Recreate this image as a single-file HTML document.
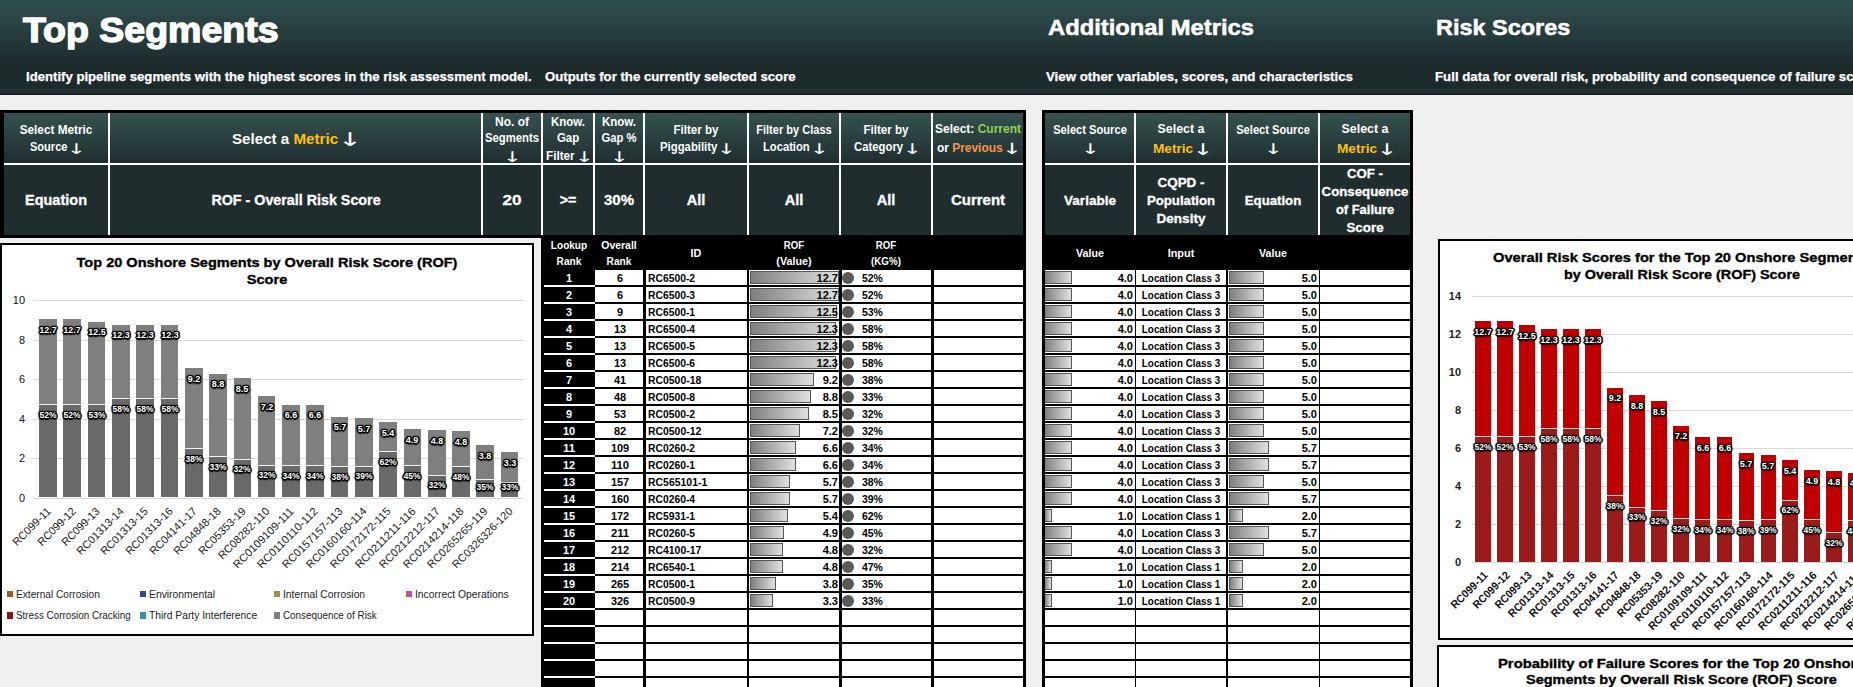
<!DOCTYPE html>
<html lang="en"><head><meta charset="utf-8"><title>Top Segments</title>
<style>
html,body{margin:0;padding:0;background:#f0f0f0;}
#pg{position:relative;width:1853px;height:687px;overflow:hidden;background:#f0f0f0;font-family:'Liberation Sans',sans-serif;}
#pg div{position:absolute;}
.t{position:absolute;white-space:nowrap;line-height:1;font-weight:bold;color:#fff;font-family:'Liberation Sans',sans-serif;}
.g{color:#ffc000}.gr{color:#92d050}.or{color:#f79646}
.dl{text-shadow:1px 0 0 #000,-1px 0 0 #000,0 1px 0 #000,0 -1px 0 #000,1px 1px 0 #000,-1px -1px 0 #000,1px -1px 0 #000,-1px 1px 0 #000,1.5px 0 1px #000,-1.5px 0 1px #000,0 1.5px 1px #000,0 -1.5px 1px #000,0 0 2px #000,0 0 3px #000;}
.ar{font-family:'DejaVu Sans',sans-serif;}
</style></head><body><div id="pg">
<div style="left:0px;top:0px;width:1853px;height:95px;background:linear-gradient(#2f4f4f 0,#1d2a2c 66px,#1d2a2c 88px,#213132 89px,#203030 93px,#141e1f 94px,#141e1f 94.6px,#8a9090 95px);"></div>
<span class="t" style="left:23.20px;top:12.47px;font-size:35px;transform:scaleX(1.071);transform-origin:0 50%;-webkit-text-stroke:1.4px #fff;">Top Segments</span>
<span class="t" style="left:26.00px;top:71.23px;font-size:12.6px;transform:scaleX(1.044);transform-origin:0 50%;-webkit-text-stroke:0.25px #fff;">Identify pipeline segments with the highest scores in the risk assessment model.</span>
<span class="t" style="left:545.20px;top:71.23px;font-size:12.6px;transform:scaleX(1.047);transform-origin:0 50%;-webkit-text-stroke:0.25px #fff;">Outputs for the currently selected score</span>
<span class="t" style="left:1047.80px;top:17.18px;font-size:22px;transform:scaleX(1.080);transform-origin:0 50%;-webkit-text-stroke:0.5px #fff;">Additional Metrics</span>
<span class="t" style="left:1045.80px;top:71.23px;font-size:12.6px;transform:scaleX(1.055);transform-origin:0 50%;-webkit-text-stroke:0.25px #fff;">View other variables, scores, and characteristics</span>
<span class="t" style="left:1436.40px;top:17.18px;font-size:22px;transform:scaleX(1.066);transform-origin:0 50%;-webkit-text-stroke:0.5px #fff;">Risk Scores</span>
<span class="t" style="left:1434.50px;top:71.23px;font-size:12.6px;transform:scaleX(1.053);transform-origin:0 50%;-webkit-text-stroke:0.25px #fff;">Full data for overall risk, probability and consequence of failure scores</span>
<div style="left:0px;top:110px;width:1026px;height:128px;background:#000;"></div>
<div style="left:4px;top:113px;width:1019px;height:122px;background:#fff;"></div>
<div style="left:4px;top:113px;width:104px;height:50px;background:linear-gradient(#35514f,#1f2e30);"></div>
<div style="left:4px;top:165px;width:104px;height:70px;background:#1f2d2e;"></div>
<div style="left:110px;top:113px;width:371px;height:50px;background:linear-gradient(#35514f,#1f2e30);"></div>
<div style="left:110px;top:165px;width:371px;height:70px;background:#1f2d2e;"></div>
<div style="left:483px;top:113px;width:58px;height:50px;background:linear-gradient(#35514f,#1f2e30);"></div>
<div style="left:483px;top:165px;width:58px;height:70px;background:#1f2d2e;"></div>
<div style="left:543px;top:113px;width:50px;height:50px;background:linear-gradient(#35514f,#1f2e30);"></div>
<div style="left:543px;top:165px;width:50px;height:70px;background:#1f2d2e;"></div>
<div style="left:595px;top:113px;width:48px;height:50px;background:linear-gradient(#35514f,#1f2e30);"></div>
<div style="left:595px;top:165px;width:48px;height:70px;background:#1f2d2e;"></div>
<div style="left:645px;top:113px;width:102px;height:50px;background:linear-gradient(#35514f,#1f2e30);"></div>
<div style="left:645px;top:165px;width:102px;height:70px;background:#1f2d2e;"></div>
<div style="left:749px;top:113px;width:90px;height:50px;background:linear-gradient(#35514f,#1f2e30);"></div>
<div style="left:749px;top:165px;width:90px;height:70px;background:#1f2d2e;"></div>
<div style="left:841px;top:113px;width:90px;height:50px;background:linear-gradient(#35514f,#1f2e30);"></div>
<div style="left:841px;top:165px;width:90px;height:70px;background:#1f2d2e;"></div>
<div style="left:933px;top:113px;width:90px;height:50px;background:linear-gradient(#35514f,#1f2e30);"></div>
<div style="left:933px;top:165px;width:90px;height:70px;background:#1f2d2e;"></div>
<span class="t" style="left:56.00px;top:123.92px;font-size:12.26px;transform:translateX(-50%) scaleX(0.962);transform-origin:50% 50%;">Select Metric</span>
<span class="t" style="left:29.63px;top:141.02px;font-size:12.26px;transform:scaleX(0.902);transform-origin:0 50%;">Source</span>
<span class="t ar" style="left:76.34px;top:136.61px;font-size:20px;font-weight:normal;transform:translateX(-50%) scale(1.14,0.73);transform-origin:50% 16.92px;">↓</span>
<span class="t" style="left:232.43px;top:130.86px;font-size:15.4px;transform:scaleX(0.984);transform-origin:0 50%;">Select a <span class="g">Metric</span></span>
<span class="t ar" style="left:350.19px;top:124.83px;font-size:25.8px;font-weight:normal;transform:translateX(-50%) scale(1.14,0.73);transform-origin:50% 21.83px;">↓</span>
<span class="t" style="left:512.00px;top:115.62px;font-size:12.26px;transform:translateX(-50%) scaleX(0.977);transform-origin:50% 50%;">No. of</span>
<span class="t" style="left:512.00px;top:132.42px;font-size:12.26px;transform:translateX(-50%) scaleX(0.920);transform-origin:50% 50%;">Segments</span>
<span class="t ar" style="left:512.00px;top:145.21px;font-size:20px;font-weight:normal;transform:translateX(-50%) scale(1.14,0.73);transform-origin:50% 16.92px;">↓</span>
<span class="t" style="left:568.00px;top:115.62px;font-size:12.26px;transform:translateX(-50%) scaleX(0.941);transform-origin:50% 50%;">Know.</span>
<span class="t" style="left:568.00px;top:132.42px;font-size:12.26px;transform:translateX(-50%) scaleX(0.933);transform-origin:50% 50%;">Gap</span>
<span class="t" style="left:546.18px;top:149.62px;font-size:12.26px;transform:scaleX(0.954);transform-origin:0 50%;">Filter</span>
<span class="t ar" style="left:583.79px;top:145.21px;font-size:20px;font-weight:normal;transform:translateX(-50%) scale(1.14,0.73);transform-origin:50% 16.92px;">↓</span>
<span class="t" style="left:619.00px;top:115.62px;font-size:12.26px;transform:translateX(-50%) scaleX(0.941);transform-origin:50% 50%;">Know.</span>
<span class="t" style="left:619.00px;top:132.42px;font-size:12.26px;transform:translateX(-50%) scaleX(0.917);transform-origin:50% 50%;">Gap %</span>
<span class="t ar" style="left:619.00px;top:145.21px;font-size:20px;font-weight:normal;transform:translateX(-50%) scale(1.14,0.73);transform-origin:50% 16.92px;">↓</span>
<span class="t" style="left:696.00px;top:124.32px;font-size:12.26px;transform:translateX(-50%) scaleX(0.944);transform-origin:50% 50%;">Filter by</span>
<span class="t" style="left:659.77px;top:141.32px;font-size:12.26px;transform:scaleX(0.926);transform-origin:0 50%;">Piggability</span>
<span class="t ar" style="left:726.19px;top:136.91px;font-size:20px;font-weight:normal;transform:translateX(-50%) scale(1.14,0.73);transform-origin:50% 16.92px;">↓</span>
<span class="t" style="left:794.00px;top:124.32px;font-size:12.26px;transform:translateX(-50%) scaleX(0.902);transform-origin:50% 50%;">Filter by Class</span>
<span class="t" style="left:763.07px;top:141.32px;font-size:12.26px;transform:scaleX(0.914);transform-origin:0 50%;">Location</span>
<span class="t ar" style="left:818.90px;top:136.91px;font-size:20px;font-weight:normal;transform:translateX(-50%) scale(1.14,0.73);transform-origin:50% 16.92px;">↓</span>
<span class="t" style="left:886.00px;top:124.32px;font-size:12.26px;transform:translateX(-50%) scaleX(0.944);transform-origin:50% 50%;">Filter by</span>
<span class="t" style="left:853.89px;top:141.32px;font-size:12.26px;transform:scaleX(0.925);transform-origin:0 50%;">Category</span>
<span class="t ar" style="left:912.08px;top:136.91px;font-size:20px;font-weight:normal;transform:translateX(-50%) scale(1.14,0.73);transform-origin:50% 16.92px;">↓</span>
<span class="t" style="left:978.00px;top:123.10px;font-size:12.88px;transform:translateX(-50%) scaleX(0.931);transform-origin:50% 50%;">Select: <span class="gr">Current</span></span>
<span class="t" style="left:937.21px;top:141.60px;font-size:12.88px;transform:scaleX(0.926);transform-origin:0 50%;">or <span class="or">Previous</span></span>
<span class="t ar" style="left:1012.46px;top:136.97px;font-size:21px;font-weight:normal;transform:translateX(-50%) scale(1.14,0.73);transform-origin:50% 17.77px;">↓</span>
<span class="t" style="left:56.00px;top:193.48px;font-size:14.08px;transform:translateX(-50%) scaleX(1.030);transform-origin:50% 50%;-webkit-text-stroke:0.3px #fff;">Equation</span>
<span class="t" style="left:295.50px;top:193.48px;font-size:14.08px;transform:translateX(-50%) scaleX(1.015);transform-origin:50% 50%;-webkit-text-stroke:0.3px #fff;">ROF - Overall Risk Score</span>
<span class="t" style="left:568.00px;top:193.48px;font-size:14.08px;transform:translateX(-50%) scaleX(1.016);transform-origin:50% 50%;-webkit-text-stroke:0.3px #fff;">&gt;=</span>
<span class="t" style="left:696.00px;top:193.48px;font-size:14.08px;transform:translateX(-50%) scaleX(1.035);transform-origin:50% 50%;-webkit-text-stroke:0.3px #fff;">All</span>
<span class="t" style="left:794.00px;top:193.48px;font-size:14.08px;transform:translateX(-50%) scaleX(1.035);transform-origin:50% 50%;-webkit-text-stroke:0.3px #fff;">All</span>
<span class="t" style="left:886.00px;top:193.48px;font-size:14.08px;transform:translateX(-50%) scaleX(1.035);transform-origin:50% 50%;-webkit-text-stroke:0.3px #fff;">All</span>
<span class="t" style="left:978.00px;top:193.48px;font-size:14.08px;transform:translateX(-50%) scaleX(1.064);transform-origin:50% 50%;-webkit-text-stroke:0.3px #fff;">Current</span>
<span class="t" style="left:512.00px;top:193.48px;font-size:14.08px;transform:translateX(-50%) scaleX(1.213);transform-origin:50% 50%;-webkit-text-stroke:0.3px #fff;">20</span>
<span class="t" style="left:619.00px;top:193.48px;font-size:14.08px;transform:translateX(-50%) scaleX(1.065);transform-origin:50% 50%;-webkit-text-stroke:0.3px #fff;">30%</span>
<div style="left:1042px;top:110px;width:370.8px;height:600px;background:#000;"></div>
<div style="left:1045px;top:113px;width:365px;height:122px;background:#fff;"></div>
<div style="left:1045px;top:113px;width:89px;height:50px;background:linear-gradient(#35514f,#1f2e30);"></div>
<div style="left:1045px;top:165px;width:89px;height:70px;background:#1f2d2e;"></div>
<div style="left:1136px;top:113px;width:90px;height:50px;background:linear-gradient(#35514f,#1f2e30);"></div>
<div style="left:1136px;top:165px;width:90px;height:70px;background:#1f2d2e;"></div>
<div style="left:1228px;top:113px;width:90px;height:50px;background:linear-gradient(#35514f,#1f2e30);"></div>
<div style="left:1228px;top:165px;width:90px;height:70px;background:#1f2d2e;"></div>
<div style="left:1320px;top:113px;width:90px;height:50px;background:linear-gradient(#35514f,#1f2e30);"></div>
<div style="left:1320px;top:165px;width:90px;height:70px;background:#1f2d2e;"></div>
<span class="t" style="left:1089.50px;top:124.12px;font-size:12.26px;transform:translateX(-50%) scaleX(0.909);transform-origin:50% 50%;">Select Source</span>
<span class="t ar" style="left:1089.50px;top:136.71px;font-size:20px;font-weight:normal;transform:translateX(-50%) scale(1.14,0.73);transform-origin:50% 16.92px;">↓</span>
<span class="t" style="left:1181.00px;top:121.77px;font-size:13.5px;transform:translateX(-50%) scaleX(0.922);transform-origin:50% 50%;">Select a</span>
<span class="t" style="left:1152.65px;top:141.67px;font-size:13.5px;transform:scaleX(1.009);transform-origin:0 50%;"><span class="g">Metric</span></span>
<span class="t ar" style="left:1202.71px;top:136.84px;font-size:22px;font-weight:normal;transform:translateX(-50%) scale(1.14,0.73);transform-origin:50% 18.61px;">↓</span>
<span class="t" style="left:1273.00px;top:124.12px;font-size:12.26px;transform:translateX(-50%) scaleX(0.909);transform-origin:50% 50%;">Select Source</span>
<span class="t ar" style="left:1273.00px;top:136.71px;font-size:20px;font-weight:normal;transform:translateX(-50%) scale(1.14,0.73);transform-origin:50% 16.92px;">↓</span>
<span class="t" style="left:1365.00px;top:121.77px;font-size:13.5px;transform:translateX(-50%) scaleX(0.922);transform-origin:50% 50%;">Select a</span>
<span class="t" style="left:1336.65px;top:141.67px;font-size:13.5px;transform:scaleX(1.009);transform-origin:0 50%;"><span class="g">Metric</span></span>
<span class="t ar" style="left:1386.71px;top:136.84px;font-size:22px;font-weight:normal;transform:translateX(-50%) scale(1.14,0.73);transform-origin:50% 18.61px;">↓</span>
<span class="t" style="left:1089.50px;top:194.96px;font-size:12.8px;transform:translateX(-50%) scaleX(1.055);transform-origin:50% 50%;-webkit-text-stroke:0.3px #fff;">Variable</span>
<span class="t" style="left:1181.00px;top:176.86px;font-size:12.8px;transform:translateX(-50%) scaleX(1.050);transform-origin:50% 50%;-webkit-text-stroke:0.3px #fff;">CQPD -</span>
<span class="t" style="left:1181.00px;top:194.96px;font-size:12.8px;transform:translateX(-50%) scaleX(1.032);transform-origin:50% 50%;-webkit-text-stroke:0.3px #fff;">Population</span>
<span class="t" style="left:1181.00px;top:213.06px;font-size:12.8px;transform:translateX(-50%) scaleX(1.058);transform-origin:50% 50%;-webkit-text-stroke:0.3px #fff;">Density</span>
<span class="t" style="left:1273.00px;top:194.96px;font-size:12.8px;transform:translateX(-50%) scaleX(1.030);transform-origin:50% 50%;-webkit-text-stroke:0.3px #fff;">Equation</span>
<span class="t" style="left:1365.00px;top:167.76px;font-size:12.8px;transform:translateX(-50%) scaleX(1.033);transform-origin:50% 50%;-webkit-text-stroke:0.3px #fff;">COF -</span>
<span class="t" style="left:1365.00px;top:185.96px;font-size:12.8px;transform:translateX(-50%) scaleX(1.035);transform-origin:50% 50%;-webkit-text-stroke:0.3px #fff;">Consequence</span>
<span class="t" style="left:1365.00px;top:203.96px;font-size:12.8px;transform:translateX(-50%) scaleX(1.011);transform-origin:50% 50%;-webkit-text-stroke:0.3px #fff;">of Failure</span>
<span class="t" style="left:1365.00px;top:221.96px;font-size:12.8px;transform:translateX(-50%) scaleX(1.044);transform-origin:50% 50%;-webkit-text-stroke:0.3px #fff;">Score</span>
<div style="left:541px;top:235px;width:485px;height:460px;background:#000;"></div>
<span class="t" style="left:568.50px;top:240.15px;font-size:11.04px;transform:translateX(-50%) scaleX(0.911);transform-origin:50% 50%;">Lookup</span>
<span class="t" style="left:568.50px;top:255.65px;font-size:11.04px;transform:translateX(-50%) scaleX(0.922);transform-origin:50% 50%;">Rank</span>
<span class="t" style="left:619.00px;top:240.15px;font-size:11.04px;transform:translateX(-50%) scaleX(0.950);transform-origin:50% 50%;">Overall</span>
<span class="t" style="left:619.00px;top:255.65px;font-size:11.04px;transform:translateX(-50%) scaleX(0.922);transform-origin:50% 50%;">Rank</span>
<span class="t" style="left:696.00px;top:247.95px;font-size:11.04px;transform:translateX(-50%) scaleX(0.976);transform-origin:50% 50%;">ID</span>
<span class="t" style="left:794.00px;top:240.15px;font-size:11.04px;transform:translateX(-50%) scaleX(0.870);transform-origin:50% 50%;">ROF</span>
<span class="t" style="left:794.00px;top:255.65px;font-size:11.04px;transform:translateX(-50%) scaleX(0.975);transform-origin:50% 50%;">(Value)</span>
<span class="t" style="left:886.00px;top:240.15px;font-size:11.04px;transform:translateX(-50%) scaleX(0.870);transform-origin:50% 50%;">ROF</span>
<span class="t" style="left:886.00px;top:255.65px;font-size:11.04px;transform:translateX(-50%) scaleX(0.889);transform-origin:50% 50%;">(KG%)</span>
<div style="left:595px;top:270px;width:48px;height:15px;background:#fff;"></div>
<div style="left:646px;top:270px;width:101px;height:15px;background:#fff;"></div>
<div style="left:749px;top:270px;width:90px;height:15px;background:#fff;"></div>
<div style="left:842px;top:270px;width:89px;height:15px;background:#fff;"></div>
<div style="left:934px;top:270px;width:89px;height:15px;background:#fff;"></div>
<div style="left:1045px;top:270px;width:89.5px;height:15px;background:#fff;"></div>
<div style="left:1136px;top:270px;width:90px;height:15px;background:#fff;"></div>
<div style="left:1228px;top:270px;width:90.7px;height:15px;background:#fff;"></div>
<div style="left:1320px;top:270px;width:90px;height:15px;background:#fff;"></div>
<div style="left:544px;top:285px;width:50.5px;height:2px;background:#fff;"></div>
<span class="t" style="left:568.50px;top:273.25px;font-size:11.04px;transform:translateX(-50%) scaleX(0.991);transform-origin:50% 50%;">1</span>
<span class="t" style="left:620.00px;top:273.25px;font-size:11.04px;color:#000;transform:translateX(-50%) scaleX(0.991);transform-origin:50% 50%;">6</span>
<span class="t" style="left:648.00px;top:273.25px;font-size:11.04px;color:#000;transform:scaleX(0.937);transform-origin:0 50%;">RC6500-2</span>
<div style="left:750px;top:271px;width:88.5px;height:12.5px;background:linear-gradient(90deg,#7f7f7f,#e0e0e0);box-sizing:border-box;border:1px solid #555;"></div>
<span class="t" style="left:838.30px;top:273.25px;font-size:11.04px;color:#000;transform:translateX(-100%) scaleX(0.999);transform-origin:100% 50%;">12.7</span>
<div style="left:842px;top:271.7px;width:12.2px;height:12.2px;background:#595959;border-radius:50%;"></div>
<span class="t" style="left:862.00px;top:273.25px;font-size:11.04px;color:#000;transform:scaleX(0.947);transform-origin:0 50%;">52%</span>
<div style="left:1045px;top:271px;width:27.2px;height:12.5px;background:linear-gradient(90deg,#7f7f7f,#e0e0e0);box-sizing:border-box;border:1px solid #555;border-left:0;"></div>
<span class="t" style="left:1133.00px;top:273.25px;font-size:11.04px;color:#000;transform:translateX(-100%) scaleX(1.002);transform-origin:100% 50%;">4.0</span>
<span class="t" style="left:1181.00px;top:273.25px;font-size:11.04px;color:#000;transform:translateX(-50%) scaleX(0.893);transform-origin:50% 50%;">Location Class 3</span>
<div style="left:1229px;top:271px;width:34.75px;height:12.5px;background:linear-gradient(90deg,#7f7f7f,#e0e0e0);box-sizing:border-box;border:1px solid #555;"></div>
<span class="t" style="left:1317.00px;top:273.25px;font-size:11.04px;color:#000;transform:translateX(-100%) scaleX(1.002);transform-origin:100% 50%;">5.0</span>
<div style="left:595px;top:287px;width:48px;height:15px;background:#fff;"></div>
<div style="left:646px;top:287px;width:101px;height:15px;background:#fff;"></div>
<div style="left:749px;top:287px;width:90px;height:15px;background:#fff;"></div>
<div style="left:842px;top:287px;width:89px;height:15px;background:#fff;"></div>
<div style="left:934px;top:287px;width:89px;height:15px;background:#fff;"></div>
<div style="left:1045px;top:287px;width:89.5px;height:15px;background:#fff;"></div>
<div style="left:1136px;top:287px;width:90px;height:15px;background:#fff;"></div>
<div style="left:1228px;top:287px;width:90.7px;height:15px;background:#fff;"></div>
<div style="left:1320px;top:287px;width:90px;height:15px;background:#fff;"></div>
<div style="left:544px;top:302px;width:50.5px;height:2px;background:#fff;"></div>
<span class="t" style="left:568.50px;top:290.25px;font-size:11.04px;transform:translateX(-50%) scaleX(0.991);transform-origin:50% 50%;">2</span>
<span class="t" style="left:620.00px;top:290.25px;font-size:11.04px;color:#000;transform:translateX(-50%) scaleX(0.991);transform-origin:50% 50%;">6</span>
<span class="t" style="left:648.00px;top:290.25px;font-size:11.04px;color:#000;transform:scaleX(0.937);transform-origin:0 50%;">RC6500-3</span>
<div style="left:750px;top:288px;width:88.5px;height:12.5px;background:linear-gradient(90deg,#7f7f7f,#e0e0e0);box-sizing:border-box;border:1px solid #555;"></div>
<span class="t" style="left:838.30px;top:290.25px;font-size:11.04px;color:#000;transform:translateX(-100%) scaleX(0.999);transform-origin:100% 50%;">12.7</span>
<div style="left:842px;top:288.7px;width:12.2px;height:12.2px;background:#595959;border-radius:50%;"></div>
<span class="t" style="left:862.00px;top:290.25px;font-size:11.04px;color:#000;transform:scaleX(0.947);transform-origin:0 50%;">52%</span>
<div style="left:1045px;top:288px;width:27.2px;height:12.5px;background:linear-gradient(90deg,#7f7f7f,#e0e0e0);box-sizing:border-box;border:1px solid #555;border-left:0;"></div>
<span class="t" style="left:1133.00px;top:290.25px;font-size:11.04px;color:#000;transform:translateX(-100%) scaleX(1.002);transform-origin:100% 50%;">4.0</span>
<span class="t" style="left:1181.00px;top:290.25px;font-size:11.04px;color:#000;transform:translateX(-50%) scaleX(0.893);transform-origin:50% 50%;">Location Class 3</span>
<div style="left:1229px;top:288px;width:34.75px;height:12.5px;background:linear-gradient(90deg,#7f7f7f,#e0e0e0);box-sizing:border-box;border:1px solid #555;"></div>
<span class="t" style="left:1317.00px;top:290.25px;font-size:11.04px;color:#000;transform:translateX(-100%) scaleX(1.002);transform-origin:100% 50%;">5.0</span>
<div style="left:595px;top:304px;width:48px;height:15px;background:#fff;"></div>
<div style="left:646px;top:304px;width:101px;height:15px;background:#fff;"></div>
<div style="left:749px;top:304px;width:90px;height:15px;background:#fff;"></div>
<div style="left:842px;top:304px;width:89px;height:15px;background:#fff;"></div>
<div style="left:934px;top:304px;width:89px;height:15px;background:#fff;"></div>
<div style="left:1045px;top:304px;width:89.5px;height:15px;background:#fff;"></div>
<div style="left:1136px;top:304px;width:90px;height:15px;background:#fff;"></div>
<div style="left:1228px;top:304px;width:90.7px;height:15px;background:#fff;"></div>
<div style="left:1320px;top:304px;width:90px;height:15px;background:#fff;"></div>
<div style="left:544px;top:319px;width:50.5px;height:2px;background:#fff;"></div>
<span class="t" style="left:568.50px;top:307.25px;font-size:11.04px;transform:translateX(-50%) scaleX(0.991);transform-origin:50% 50%;">3</span>
<span class="t" style="left:620.00px;top:307.25px;font-size:11.04px;color:#000;transform:translateX(-50%) scaleX(0.991);transform-origin:50% 50%;">9</span>
<span class="t" style="left:648.00px;top:307.25px;font-size:11.04px;color:#000;transform:scaleX(0.937);transform-origin:0 50%;">RC6500-1</span>
<div style="left:750px;top:305px;width:87.1063px;height:12.5px;background:linear-gradient(90deg,#7f7f7f,#e0e0e0);box-sizing:border-box;border:1px solid #555;"></div>
<span class="t" style="left:838.30px;top:307.25px;font-size:11.04px;color:#000;transform:translateX(-100%) scaleX(0.999);transform-origin:100% 50%;">12.5</span>
<div style="left:842px;top:305.7px;width:12.2px;height:12.2px;background:#595959;border-radius:50%;"></div>
<span class="t" style="left:862.00px;top:307.25px;font-size:11.04px;color:#000;transform:scaleX(0.947);transform-origin:0 50%;">53%</span>
<div style="left:1045px;top:305px;width:27.2px;height:12.5px;background:linear-gradient(90deg,#7f7f7f,#e0e0e0);box-sizing:border-box;border:1px solid #555;border-left:0;"></div>
<span class="t" style="left:1133.00px;top:307.25px;font-size:11.04px;color:#000;transform:translateX(-100%) scaleX(1.002);transform-origin:100% 50%;">4.0</span>
<span class="t" style="left:1181.00px;top:307.25px;font-size:11.04px;color:#000;transform:translateX(-50%) scaleX(0.893);transform-origin:50% 50%;">Location Class 3</span>
<div style="left:1229px;top:305px;width:34.75px;height:12.5px;background:linear-gradient(90deg,#7f7f7f,#e0e0e0);box-sizing:border-box;border:1px solid #555;"></div>
<span class="t" style="left:1317.00px;top:307.25px;font-size:11.04px;color:#000;transform:translateX(-100%) scaleX(1.002);transform-origin:100% 50%;">5.0</span>
<div style="left:595px;top:321px;width:48px;height:15px;background:#fff;"></div>
<div style="left:646px;top:321px;width:101px;height:15px;background:#fff;"></div>
<div style="left:749px;top:321px;width:90px;height:15px;background:#fff;"></div>
<div style="left:842px;top:321px;width:89px;height:15px;background:#fff;"></div>
<div style="left:934px;top:321px;width:89px;height:15px;background:#fff;"></div>
<div style="left:1045px;top:321px;width:89.5px;height:15px;background:#fff;"></div>
<div style="left:1136px;top:321px;width:90px;height:15px;background:#fff;"></div>
<div style="left:1228px;top:321px;width:90.7px;height:15px;background:#fff;"></div>
<div style="left:1320px;top:321px;width:90px;height:15px;background:#fff;"></div>
<div style="left:544px;top:336px;width:50.5px;height:2px;background:#fff;"></div>
<span class="t" style="left:568.50px;top:324.25px;font-size:11.04px;transform:translateX(-50%) scaleX(0.991);transform-origin:50% 50%;">4</span>
<span class="t" style="left:620.00px;top:324.25px;font-size:11.04px;color:#000;transform:translateX(-50%) scaleX(0.991);transform-origin:50% 50%;">13</span>
<span class="t" style="left:648.00px;top:324.25px;font-size:11.04px;color:#000;transform:scaleX(0.937);transform-origin:0 50%;">RC6500-4</span>
<div style="left:750px;top:322px;width:85.7126px;height:12.5px;background:linear-gradient(90deg,#7f7f7f,#e0e0e0);box-sizing:border-box;border:1px solid #555;"></div>
<span class="t" style="left:838.30px;top:324.25px;font-size:11.04px;color:#000;transform:translateX(-100%) scaleX(0.999);transform-origin:100% 50%;">12.3</span>
<div style="left:842px;top:322.7px;width:12.2px;height:12.2px;background:#595959;border-radius:50%;"></div>
<span class="t" style="left:862.00px;top:324.25px;font-size:11.04px;color:#000;transform:scaleX(0.947);transform-origin:0 50%;">58%</span>
<div style="left:1045px;top:322px;width:27.2px;height:12.5px;background:linear-gradient(90deg,#7f7f7f,#e0e0e0);box-sizing:border-box;border:1px solid #555;border-left:0;"></div>
<span class="t" style="left:1133.00px;top:324.25px;font-size:11.04px;color:#000;transform:translateX(-100%) scaleX(1.002);transform-origin:100% 50%;">4.0</span>
<span class="t" style="left:1181.00px;top:324.25px;font-size:11.04px;color:#000;transform:translateX(-50%) scaleX(0.893);transform-origin:50% 50%;">Location Class 3</span>
<div style="left:1229px;top:322px;width:34.75px;height:12.5px;background:linear-gradient(90deg,#7f7f7f,#e0e0e0);box-sizing:border-box;border:1px solid #555;"></div>
<span class="t" style="left:1317.00px;top:324.25px;font-size:11.04px;color:#000;transform:translateX(-100%) scaleX(1.002);transform-origin:100% 50%;">5.0</span>
<div style="left:595px;top:338px;width:48px;height:15px;background:#fff;"></div>
<div style="left:646px;top:338px;width:101px;height:15px;background:#fff;"></div>
<div style="left:749px;top:338px;width:90px;height:15px;background:#fff;"></div>
<div style="left:842px;top:338px;width:89px;height:15px;background:#fff;"></div>
<div style="left:934px;top:338px;width:89px;height:15px;background:#fff;"></div>
<div style="left:1045px;top:338px;width:89.5px;height:15px;background:#fff;"></div>
<div style="left:1136px;top:338px;width:90px;height:15px;background:#fff;"></div>
<div style="left:1228px;top:338px;width:90.7px;height:15px;background:#fff;"></div>
<div style="left:1320px;top:338px;width:90px;height:15px;background:#fff;"></div>
<div style="left:544px;top:353px;width:50.5px;height:2px;background:#fff;"></div>
<span class="t" style="left:568.50px;top:341.25px;font-size:11.04px;transform:translateX(-50%) scaleX(0.991);transform-origin:50% 50%;">5</span>
<span class="t" style="left:620.00px;top:341.25px;font-size:11.04px;color:#000;transform:translateX(-50%) scaleX(0.991);transform-origin:50% 50%;">13</span>
<span class="t" style="left:648.00px;top:341.25px;font-size:11.04px;color:#000;transform:scaleX(0.937);transform-origin:0 50%;">RC6500-5</span>
<div style="left:750px;top:339px;width:85.7126px;height:12.5px;background:linear-gradient(90deg,#7f7f7f,#e0e0e0);box-sizing:border-box;border:1px solid #555;"></div>
<span class="t" style="left:838.30px;top:341.25px;font-size:11.04px;color:#000;transform:translateX(-100%) scaleX(0.999);transform-origin:100% 50%;">12.3</span>
<div style="left:842px;top:339.7px;width:12.2px;height:12.2px;background:#595959;border-radius:50%;"></div>
<span class="t" style="left:862.00px;top:341.25px;font-size:11.04px;color:#000;transform:scaleX(0.947);transform-origin:0 50%;">58%</span>
<div style="left:1045px;top:339px;width:27.2px;height:12.5px;background:linear-gradient(90deg,#7f7f7f,#e0e0e0);box-sizing:border-box;border:1px solid #555;border-left:0;"></div>
<span class="t" style="left:1133.00px;top:341.25px;font-size:11.04px;color:#000;transform:translateX(-100%) scaleX(1.002);transform-origin:100% 50%;">4.0</span>
<span class="t" style="left:1181.00px;top:341.25px;font-size:11.04px;color:#000;transform:translateX(-50%) scaleX(0.893);transform-origin:50% 50%;">Location Class 3</span>
<div style="left:1229px;top:339px;width:34.75px;height:12.5px;background:linear-gradient(90deg,#7f7f7f,#e0e0e0);box-sizing:border-box;border:1px solid #555;"></div>
<span class="t" style="left:1317.00px;top:341.25px;font-size:11.04px;color:#000;transform:translateX(-100%) scaleX(1.002);transform-origin:100% 50%;">5.0</span>
<div style="left:595px;top:355px;width:48px;height:15px;background:#fff;"></div>
<div style="left:646px;top:355px;width:101px;height:15px;background:#fff;"></div>
<div style="left:749px;top:355px;width:90px;height:15px;background:#fff;"></div>
<div style="left:842px;top:355px;width:89px;height:15px;background:#fff;"></div>
<div style="left:934px;top:355px;width:89px;height:15px;background:#fff;"></div>
<div style="left:1045px;top:355px;width:89.5px;height:15px;background:#fff;"></div>
<div style="left:1136px;top:355px;width:90px;height:15px;background:#fff;"></div>
<div style="left:1228px;top:355px;width:90.7px;height:15px;background:#fff;"></div>
<div style="left:1320px;top:355px;width:90px;height:15px;background:#fff;"></div>
<div style="left:544px;top:370px;width:50.5px;height:2px;background:#fff;"></div>
<span class="t" style="left:568.50px;top:358.25px;font-size:11.04px;transform:translateX(-50%) scaleX(0.991);transform-origin:50% 50%;">6</span>
<span class="t" style="left:620.00px;top:358.25px;font-size:11.04px;color:#000;transform:translateX(-50%) scaleX(0.991);transform-origin:50% 50%;">13</span>
<span class="t" style="left:648.00px;top:358.25px;font-size:11.04px;color:#000;transform:scaleX(0.937);transform-origin:0 50%;">RC6500-6</span>
<div style="left:750px;top:356px;width:85.7126px;height:12.5px;background:linear-gradient(90deg,#7f7f7f,#e0e0e0);box-sizing:border-box;border:1px solid #555;"></div>
<span class="t" style="left:838.30px;top:358.25px;font-size:11.04px;color:#000;transform:translateX(-100%) scaleX(0.999);transform-origin:100% 50%;">12.3</span>
<div style="left:842px;top:356.7px;width:12.2px;height:12.2px;background:#595959;border-radius:50%;"></div>
<span class="t" style="left:862.00px;top:358.25px;font-size:11.04px;color:#000;transform:scaleX(0.947);transform-origin:0 50%;">58%</span>
<div style="left:1045px;top:356px;width:27.2px;height:12.5px;background:linear-gradient(90deg,#7f7f7f,#e0e0e0);box-sizing:border-box;border:1px solid #555;border-left:0;"></div>
<span class="t" style="left:1133.00px;top:358.25px;font-size:11.04px;color:#000;transform:translateX(-100%) scaleX(1.002);transform-origin:100% 50%;">4.0</span>
<span class="t" style="left:1181.00px;top:358.25px;font-size:11.04px;color:#000;transform:translateX(-50%) scaleX(0.893);transform-origin:50% 50%;">Location Class 3</span>
<div style="left:1229px;top:356px;width:34.75px;height:12.5px;background:linear-gradient(90deg,#7f7f7f,#e0e0e0);box-sizing:border-box;border:1px solid #555;"></div>
<span class="t" style="left:1317.00px;top:358.25px;font-size:11.04px;color:#000;transform:translateX(-100%) scaleX(1.002);transform-origin:100% 50%;">5.0</span>
<div style="left:595px;top:372px;width:48px;height:15px;background:#fff;"></div>
<div style="left:646px;top:372px;width:101px;height:15px;background:#fff;"></div>
<div style="left:749px;top:372px;width:90px;height:15px;background:#fff;"></div>
<div style="left:842px;top:372px;width:89px;height:15px;background:#fff;"></div>
<div style="left:934px;top:372px;width:89px;height:15px;background:#fff;"></div>
<div style="left:1045px;top:372px;width:89.5px;height:15px;background:#fff;"></div>
<div style="left:1136px;top:372px;width:90px;height:15px;background:#fff;"></div>
<div style="left:1228px;top:372px;width:90.7px;height:15px;background:#fff;"></div>
<div style="left:1320px;top:372px;width:90px;height:15px;background:#fff;"></div>
<div style="left:544px;top:387px;width:50.5px;height:2px;background:#fff;"></div>
<span class="t" style="left:568.50px;top:375.25px;font-size:11.04px;transform:translateX(-50%) scaleX(0.991);transform-origin:50% 50%;">7</span>
<span class="t" style="left:620.00px;top:375.25px;font-size:11.04px;color:#000;transform:translateX(-50%) scaleX(0.991);transform-origin:50% 50%;">41</span>
<span class="t" style="left:648.00px;top:375.25px;font-size:11.04px;color:#000;transform:scaleX(0.943);transform-origin:0 50%;">RC0500-18</span>
<div style="left:750px;top:373px;width:64.1102px;height:12.5px;background:linear-gradient(90deg,#7f7f7f,#e0e0e0);box-sizing:border-box;border:1px solid #555;"></div>
<span class="t" style="left:838.30px;top:375.25px;font-size:11.04px;color:#000;transform:translateX(-100%) scaleX(1.002);transform-origin:100% 50%;">9.2</span>
<div style="left:842px;top:373.7px;width:12.2px;height:12.2px;background:#595959;border-radius:50%;"></div>
<span class="t" style="left:862.00px;top:375.25px;font-size:11.04px;color:#000;transform:scaleX(0.947);transform-origin:0 50%;">38%</span>
<div style="left:1045px;top:373px;width:27.2px;height:12.5px;background:linear-gradient(90deg,#7f7f7f,#e0e0e0);box-sizing:border-box;border:1px solid #555;border-left:0;"></div>
<span class="t" style="left:1133.00px;top:375.25px;font-size:11.04px;color:#000;transform:translateX(-100%) scaleX(1.002);transform-origin:100% 50%;">4.0</span>
<span class="t" style="left:1181.00px;top:375.25px;font-size:11.04px;color:#000;transform:translateX(-50%) scaleX(0.893);transform-origin:50% 50%;">Location Class 3</span>
<div style="left:1229px;top:373px;width:34.75px;height:12.5px;background:linear-gradient(90deg,#7f7f7f,#e0e0e0);box-sizing:border-box;border:1px solid #555;"></div>
<span class="t" style="left:1317.00px;top:375.25px;font-size:11.04px;color:#000;transform:translateX(-100%) scaleX(1.002);transform-origin:100% 50%;">5.0</span>
<div style="left:595px;top:389px;width:48px;height:15px;background:#fff;"></div>
<div style="left:646px;top:389px;width:101px;height:15px;background:#fff;"></div>
<div style="left:749px;top:389px;width:90px;height:15px;background:#fff;"></div>
<div style="left:842px;top:389px;width:89px;height:15px;background:#fff;"></div>
<div style="left:934px;top:389px;width:89px;height:15px;background:#fff;"></div>
<div style="left:1045px;top:389px;width:89.5px;height:15px;background:#fff;"></div>
<div style="left:1136px;top:389px;width:90px;height:15px;background:#fff;"></div>
<div style="left:1228px;top:389px;width:90.7px;height:15px;background:#fff;"></div>
<div style="left:1320px;top:389px;width:90px;height:15px;background:#fff;"></div>
<div style="left:544px;top:404px;width:50.5px;height:2px;background:#fff;"></div>
<span class="t" style="left:568.50px;top:392.25px;font-size:11.04px;transform:translateX(-50%) scaleX(0.991);transform-origin:50% 50%;">8</span>
<span class="t" style="left:620.00px;top:392.25px;font-size:11.04px;color:#000;transform:translateX(-50%) scaleX(0.991);transform-origin:50% 50%;">48</span>
<span class="t" style="left:648.00px;top:392.25px;font-size:11.04px;color:#000;transform:scaleX(0.937);transform-origin:0 50%;">RC0500-8</span>
<div style="left:750px;top:390px;width:61.3228px;height:12.5px;background:linear-gradient(90deg,#7f7f7f,#e0e0e0);box-sizing:border-box;border:1px solid #555;"></div>
<span class="t" style="left:838.30px;top:392.25px;font-size:11.04px;color:#000;transform:translateX(-100%) scaleX(1.002);transform-origin:100% 50%;">8.8</span>
<div style="left:842px;top:390.7px;width:12.2px;height:12.2px;background:#595959;border-radius:50%;"></div>
<span class="t" style="left:862.00px;top:392.25px;font-size:11.04px;color:#000;transform:scaleX(0.947);transform-origin:0 50%;">33%</span>
<div style="left:1045px;top:390px;width:27.2px;height:12.5px;background:linear-gradient(90deg,#7f7f7f,#e0e0e0);box-sizing:border-box;border:1px solid #555;border-left:0;"></div>
<span class="t" style="left:1133.00px;top:392.25px;font-size:11.04px;color:#000;transform:translateX(-100%) scaleX(1.002);transform-origin:100% 50%;">4.0</span>
<span class="t" style="left:1181.00px;top:392.25px;font-size:11.04px;color:#000;transform:translateX(-50%) scaleX(0.893);transform-origin:50% 50%;">Location Class 3</span>
<div style="left:1229px;top:390px;width:34.75px;height:12.5px;background:linear-gradient(90deg,#7f7f7f,#e0e0e0);box-sizing:border-box;border:1px solid #555;"></div>
<span class="t" style="left:1317.00px;top:392.25px;font-size:11.04px;color:#000;transform:translateX(-100%) scaleX(1.002);transform-origin:100% 50%;">5.0</span>
<div style="left:595px;top:406px;width:48px;height:15px;background:#fff;"></div>
<div style="left:646px;top:406px;width:101px;height:15px;background:#fff;"></div>
<div style="left:749px;top:406px;width:90px;height:15px;background:#fff;"></div>
<div style="left:842px;top:406px;width:89px;height:15px;background:#fff;"></div>
<div style="left:934px;top:406px;width:89px;height:15px;background:#fff;"></div>
<div style="left:1045px;top:406px;width:89.5px;height:15px;background:#fff;"></div>
<div style="left:1136px;top:406px;width:90px;height:15px;background:#fff;"></div>
<div style="left:1228px;top:406px;width:90.7px;height:15px;background:#fff;"></div>
<div style="left:1320px;top:406px;width:90px;height:15px;background:#fff;"></div>
<div style="left:544px;top:421px;width:50.5px;height:2px;background:#fff;"></div>
<span class="t" style="left:568.50px;top:409.25px;font-size:11.04px;transform:translateX(-50%) scaleX(0.991);transform-origin:50% 50%;">9</span>
<span class="t" style="left:620.00px;top:409.25px;font-size:11.04px;color:#000;transform:translateX(-50%) scaleX(0.991);transform-origin:50% 50%;">53</span>
<span class="t" style="left:648.00px;top:409.25px;font-size:11.04px;color:#000;transform:scaleX(0.937);transform-origin:0 50%;">RC0500-2</span>
<div style="left:750px;top:407px;width:59.2323px;height:12.5px;background:linear-gradient(90deg,#7f7f7f,#e0e0e0);box-sizing:border-box;border:1px solid #555;"></div>
<span class="t" style="left:838.30px;top:409.25px;font-size:11.04px;color:#000;transform:translateX(-100%) scaleX(1.002);transform-origin:100% 50%;">8.5</span>
<div style="left:842px;top:407.7px;width:12.2px;height:12.2px;background:#595959;border-radius:50%;"></div>
<span class="t" style="left:862.00px;top:409.25px;font-size:11.04px;color:#000;transform:scaleX(0.947);transform-origin:0 50%;">32%</span>
<div style="left:1045px;top:407px;width:27.2px;height:12.5px;background:linear-gradient(90deg,#7f7f7f,#e0e0e0);box-sizing:border-box;border:1px solid #555;border-left:0;"></div>
<span class="t" style="left:1133.00px;top:409.25px;font-size:11.04px;color:#000;transform:translateX(-100%) scaleX(1.002);transform-origin:100% 50%;">4.0</span>
<span class="t" style="left:1181.00px;top:409.25px;font-size:11.04px;color:#000;transform:translateX(-50%) scaleX(0.893);transform-origin:50% 50%;">Location Class 3</span>
<div style="left:1229px;top:407px;width:34.75px;height:12.5px;background:linear-gradient(90deg,#7f7f7f,#e0e0e0);box-sizing:border-box;border:1px solid #555;"></div>
<span class="t" style="left:1317.00px;top:409.25px;font-size:11.04px;color:#000;transform:translateX(-100%) scaleX(1.002);transform-origin:100% 50%;">5.0</span>
<div style="left:595px;top:423px;width:48px;height:15px;background:#fff;"></div>
<div style="left:646px;top:423px;width:101px;height:15px;background:#fff;"></div>
<div style="left:749px;top:423px;width:90px;height:15px;background:#fff;"></div>
<div style="left:842px;top:423px;width:89px;height:15px;background:#fff;"></div>
<div style="left:934px;top:423px;width:89px;height:15px;background:#fff;"></div>
<div style="left:1045px;top:423px;width:89.5px;height:15px;background:#fff;"></div>
<div style="left:1136px;top:423px;width:90px;height:15px;background:#fff;"></div>
<div style="left:1228px;top:423px;width:90.7px;height:15px;background:#fff;"></div>
<div style="left:1320px;top:423px;width:90px;height:15px;background:#fff;"></div>
<div style="left:544px;top:438px;width:50.5px;height:2px;background:#fff;"></div>
<span class="t" style="left:568.50px;top:426.25px;font-size:11.04px;transform:translateX(-50%) scaleX(0.991);transform-origin:50% 50%;">10</span>
<span class="t" style="left:620.00px;top:426.25px;font-size:11.04px;color:#000;transform:translateX(-50%) scaleX(0.991);transform-origin:50% 50%;">82</span>
<span class="t" style="left:648.00px;top:426.25px;font-size:11.04px;color:#000;transform:scaleX(0.943);transform-origin:0 50%;">RC0500-12</span>
<div style="left:750px;top:424px;width:50.1732px;height:12.5px;background:linear-gradient(90deg,#7f7f7f,#e0e0e0);box-sizing:border-box;border:1px solid #555;"></div>
<span class="t" style="left:838.30px;top:426.25px;font-size:11.04px;color:#000;transform:translateX(-100%) scaleX(1.002);transform-origin:100% 50%;">7.2</span>
<div style="left:842px;top:424.7px;width:12.2px;height:12.2px;background:#595959;border-radius:50%;"></div>
<span class="t" style="left:862.00px;top:426.25px;font-size:11.04px;color:#000;transform:scaleX(0.947);transform-origin:0 50%;">32%</span>
<div style="left:1045px;top:424px;width:27.2px;height:12.5px;background:linear-gradient(90deg,#7f7f7f,#e0e0e0);box-sizing:border-box;border:1px solid #555;border-left:0;"></div>
<span class="t" style="left:1133.00px;top:426.25px;font-size:11.04px;color:#000;transform:translateX(-100%) scaleX(1.002);transform-origin:100% 50%;">4.0</span>
<span class="t" style="left:1181.00px;top:426.25px;font-size:11.04px;color:#000;transform:translateX(-50%) scaleX(0.893);transform-origin:50% 50%;">Location Class 3</span>
<div style="left:1229px;top:424px;width:34.75px;height:12.5px;background:linear-gradient(90deg,#7f7f7f,#e0e0e0);box-sizing:border-box;border:1px solid #555;"></div>
<span class="t" style="left:1317.00px;top:426.25px;font-size:11.04px;color:#000;transform:translateX(-100%) scaleX(1.002);transform-origin:100% 50%;">5.0</span>
<div style="left:595px;top:440px;width:48px;height:15px;background:#fff;"></div>
<div style="left:646px;top:440px;width:101px;height:15px;background:#fff;"></div>
<div style="left:749px;top:440px;width:90px;height:15px;background:#fff;"></div>
<div style="left:842px;top:440px;width:89px;height:15px;background:#fff;"></div>
<div style="left:934px;top:440px;width:89px;height:15px;background:#fff;"></div>
<div style="left:1045px;top:440px;width:89.5px;height:15px;background:#fff;"></div>
<div style="left:1136px;top:440px;width:90px;height:15px;background:#fff;"></div>
<div style="left:1228px;top:440px;width:90.7px;height:15px;background:#fff;"></div>
<div style="left:1320px;top:440px;width:90px;height:15px;background:#fff;"></div>
<div style="left:544px;top:455px;width:50.5px;height:2px;background:#fff;"></div>
<span class="t" style="left:568.50px;top:443.25px;font-size:11.04px;transform:translateX(-50%) scaleX(1.043);transform-origin:50% 50%;">11</span>
<span class="t" style="left:620.00px;top:443.25px;font-size:11.04px;color:#000;transform:translateX(-50%) scaleX(0.991);transform-origin:50% 50%;">109</span>
<span class="t" style="left:648.00px;top:443.25px;font-size:11.04px;color:#000;transform:scaleX(0.937);transform-origin:0 50%;">RC0260-2</span>
<div style="left:750px;top:441px;width:45.9921px;height:12.5px;background:linear-gradient(90deg,#7f7f7f,#e0e0e0);box-sizing:border-box;border:1px solid #555;"></div>
<span class="t" style="left:838.30px;top:443.25px;font-size:11.04px;color:#000;transform:translateX(-100%) scaleX(1.002);transform-origin:100% 50%;">6.6</span>
<div style="left:842px;top:441.7px;width:12.2px;height:12.2px;background:#595959;border-radius:50%;"></div>
<span class="t" style="left:862.00px;top:443.25px;font-size:11.04px;color:#000;transform:scaleX(0.947);transform-origin:0 50%;">34%</span>
<div style="left:1045px;top:441px;width:27.2px;height:12.5px;background:linear-gradient(90deg,#7f7f7f,#e0e0e0);box-sizing:border-box;border:1px solid #555;border-left:0;"></div>
<span class="t" style="left:1133.00px;top:443.25px;font-size:11.04px;color:#000;transform:translateX(-100%) scaleX(1.002);transform-origin:100% 50%;">4.0</span>
<span class="t" style="left:1181.00px;top:443.25px;font-size:11.04px;color:#000;transform:translateX(-50%) scaleX(0.893);transform-origin:50% 50%;">Location Class 3</span>
<div style="left:1229px;top:441px;width:39.615px;height:12.5px;background:linear-gradient(90deg,#7f7f7f,#e0e0e0);box-sizing:border-box;border:1px solid #555;"></div>
<span class="t" style="left:1317.00px;top:443.25px;font-size:11.04px;color:#000;transform:translateX(-100%) scaleX(1.002);transform-origin:100% 50%;">5.7</span>
<div style="left:595px;top:457px;width:48px;height:15px;background:#fff;"></div>
<div style="left:646px;top:457px;width:101px;height:15px;background:#fff;"></div>
<div style="left:749px;top:457px;width:90px;height:15px;background:#fff;"></div>
<div style="left:842px;top:457px;width:89px;height:15px;background:#fff;"></div>
<div style="left:934px;top:457px;width:89px;height:15px;background:#fff;"></div>
<div style="left:1045px;top:457px;width:89.5px;height:15px;background:#fff;"></div>
<div style="left:1136px;top:457px;width:90px;height:15px;background:#fff;"></div>
<div style="left:1228px;top:457px;width:90.7px;height:15px;background:#fff;"></div>
<div style="left:1320px;top:457px;width:90px;height:15px;background:#fff;"></div>
<div style="left:544px;top:472px;width:50.5px;height:2px;background:#fff;"></div>
<span class="t" style="left:568.50px;top:460.25px;font-size:11.04px;transform:translateX(-50%) scaleX(0.991);transform-origin:50% 50%;">12</span>
<span class="t" style="left:620.00px;top:460.25px;font-size:11.04px;color:#000;transform:translateX(-50%) scaleX(1.025);transform-origin:50% 50%;">110</span>
<span class="t" style="left:648.00px;top:460.25px;font-size:11.04px;color:#000;transform:scaleX(0.937);transform-origin:0 50%;">RC0260-1</span>
<div style="left:750px;top:458px;width:45.9921px;height:12.5px;background:linear-gradient(90deg,#7f7f7f,#e0e0e0);box-sizing:border-box;border:1px solid #555;"></div>
<span class="t" style="left:838.30px;top:460.25px;font-size:11.04px;color:#000;transform:translateX(-100%) scaleX(1.002);transform-origin:100% 50%;">6.6</span>
<div style="left:842px;top:458.7px;width:12.2px;height:12.2px;background:#595959;border-radius:50%;"></div>
<span class="t" style="left:862.00px;top:460.25px;font-size:11.04px;color:#000;transform:scaleX(0.947);transform-origin:0 50%;">34%</span>
<div style="left:1045px;top:458px;width:27.2px;height:12.5px;background:linear-gradient(90deg,#7f7f7f,#e0e0e0);box-sizing:border-box;border:1px solid #555;border-left:0;"></div>
<span class="t" style="left:1133.00px;top:460.25px;font-size:11.04px;color:#000;transform:translateX(-100%) scaleX(1.002);transform-origin:100% 50%;">4.0</span>
<span class="t" style="left:1181.00px;top:460.25px;font-size:11.04px;color:#000;transform:translateX(-50%) scaleX(0.893);transform-origin:50% 50%;">Location Class 3</span>
<div style="left:1229px;top:458px;width:39.615px;height:12.5px;background:linear-gradient(90deg,#7f7f7f,#e0e0e0);box-sizing:border-box;border:1px solid #555;"></div>
<span class="t" style="left:1317.00px;top:460.25px;font-size:11.04px;color:#000;transform:translateX(-100%) scaleX(1.002);transform-origin:100% 50%;">5.7</span>
<div style="left:595px;top:474px;width:48px;height:15px;background:#fff;"></div>
<div style="left:646px;top:474px;width:101px;height:15px;background:#fff;"></div>
<div style="left:749px;top:474px;width:90px;height:15px;background:#fff;"></div>
<div style="left:842px;top:474px;width:89px;height:15px;background:#fff;"></div>
<div style="left:934px;top:474px;width:89px;height:15px;background:#fff;"></div>
<div style="left:1045px;top:474px;width:89.5px;height:15px;background:#fff;"></div>
<div style="left:1136px;top:474px;width:90px;height:15px;background:#fff;"></div>
<div style="left:1228px;top:474px;width:90.7px;height:15px;background:#fff;"></div>
<div style="left:1320px;top:474px;width:90px;height:15px;background:#fff;"></div>
<div style="left:544px;top:489px;width:50.5px;height:2px;background:#fff;"></div>
<span class="t" style="left:568.50px;top:477.25px;font-size:11.04px;transform:translateX(-50%) scaleX(0.991);transform-origin:50% 50%;">13</span>
<span class="t" style="left:620.00px;top:477.25px;font-size:11.04px;color:#000;transform:translateX(-50%) scaleX(0.991);transform-origin:50% 50%;">157</span>
<span class="t" style="left:648.00px;top:477.25px;font-size:11.04px;color:#000;transform:scaleX(0.947);transform-origin:0 50%;">RC565101-1</span>
<div style="left:750px;top:475px;width:39.7205px;height:12.5px;background:linear-gradient(90deg,#7f7f7f,#e0e0e0);box-sizing:border-box;border:1px solid #555;"></div>
<span class="t" style="left:838.30px;top:477.25px;font-size:11.04px;color:#000;transform:translateX(-100%) scaleX(1.002);transform-origin:100% 50%;">5.7</span>
<div style="left:842px;top:475.7px;width:12.2px;height:12.2px;background:#595959;border-radius:50%;"></div>
<span class="t" style="left:862.00px;top:477.25px;font-size:11.04px;color:#000;transform:scaleX(0.947);transform-origin:0 50%;">38%</span>
<div style="left:1045px;top:475px;width:27.2px;height:12.5px;background:linear-gradient(90deg,#7f7f7f,#e0e0e0);box-sizing:border-box;border:1px solid #555;border-left:0;"></div>
<span class="t" style="left:1133.00px;top:477.25px;font-size:11.04px;color:#000;transform:translateX(-100%) scaleX(1.002);transform-origin:100% 50%;">4.0</span>
<span class="t" style="left:1181.00px;top:477.25px;font-size:11.04px;color:#000;transform:translateX(-50%) scaleX(0.893);transform-origin:50% 50%;">Location Class 3</span>
<div style="left:1229px;top:475px;width:34.75px;height:12.5px;background:linear-gradient(90deg,#7f7f7f,#e0e0e0);box-sizing:border-box;border:1px solid #555;"></div>
<span class="t" style="left:1317.00px;top:477.25px;font-size:11.04px;color:#000;transform:translateX(-100%) scaleX(1.002);transform-origin:100% 50%;">5.0</span>
<div style="left:595px;top:491px;width:48px;height:15px;background:#fff;"></div>
<div style="left:646px;top:491px;width:101px;height:15px;background:#fff;"></div>
<div style="left:749px;top:491px;width:90px;height:15px;background:#fff;"></div>
<div style="left:842px;top:491px;width:89px;height:15px;background:#fff;"></div>
<div style="left:934px;top:491px;width:89px;height:15px;background:#fff;"></div>
<div style="left:1045px;top:491px;width:89.5px;height:15px;background:#fff;"></div>
<div style="left:1136px;top:491px;width:90px;height:15px;background:#fff;"></div>
<div style="left:1228px;top:491px;width:90.7px;height:15px;background:#fff;"></div>
<div style="left:1320px;top:491px;width:90px;height:15px;background:#fff;"></div>
<div style="left:544px;top:506px;width:50.5px;height:2px;background:#fff;"></div>
<span class="t" style="left:568.50px;top:494.25px;font-size:11.04px;transform:translateX(-50%) scaleX(0.991);transform-origin:50% 50%;">14</span>
<span class="t" style="left:620.00px;top:494.25px;font-size:11.04px;color:#000;transform:translateX(-50%) scaleX(0.991);transform-origin:50% 50%;">160</span>
<span class="t" style="left:648.00px;top:494.25px;font-size:11.04px;color:#000;transform:scaleX(0.937);transform-origin:0 50%;">RC0260-4</span>
<div style="left:750px;top:492px;width:39.7205px;height:12.5px;background:linear-gradient(90deg,#7f7f7f,#e0e0e0);box-sizing:border-box;border:1px solid #555;"></div>
<span class="t" style="left:838.30px;top:494.25px;font-size:11.04px;color:#000;transform:translateX(-100%) scaleX(1.002);transform-origin:100% 50%;">5.7</span>
<div style="left:842px;top:492.7px;width:12.2px;height:12.2px;background:#595959;border-radius:50%;"></div>
<span class="t" style="left:862.00px;top:494.25px;font-size:11.04px;color:#000;transform:scaleX(0.947);transform-origin:0 50%;">39%</span>
<div style="left:1045px;top:492px;width:27.2px;height:12.5px;background:linear-gradient(90deg,#7f7f7f,#e0e0e0);box-sizing:border-box;border:1px solid #555;border-left:0;"></div>
<span class="t" style="left:1133.00px;top:494.25px;font-size:11.04px;color:#000;transform:translateX(-100%) scaleX(1.002);transform-origin:100% 50%;">4.0</span>
<span class="t" style="left:1181.00px;top:494.25px;font-size:11.04px;color:#000;transform:translateX(-50%) scaleX(0.893);transform-origin:50% 50%;">Location Class 3</span>
<div style="left:1229px;top:492px;width:39.615px;height:12.5px;background:linear-gradient(90deg,#7f7f7f,#e0e0e0);box-sizing:border-box;border:1px solid #555;"></div>
<span class="t" style="left:1317.00px;top:494.25px;font-size:11.04px;color:#000;transform:translateX(-100%) scaleX(1.002);transform-origin:100% 50%;">5.7</span>
<div style="left:595px;top:508px;width:48px;height:15px;background:#fff;"></div>
<div style="left:646px;top:508px;width:101px;height:15px;background:#fff;"></div>
<div style="left:749px;top:508px;width:90px;height:15px;background:#fff;"></div>
<div style="left:842px;top:508px;width:89px;height:15px;background:#fff;"></div>
<div style="left:934px;top:508px;width:89px;height:15px;background:#fff;"></div>
<div style="left:1045px;top:508px;width:89.5px;height:15px;background:#fff;"></div>
<div style="left:1136px;top:508px;width:90px;height:15px;background:#fff;"></div>
<div style="left:1228px;top:508px;width:90.7px;height:15px;background:#fff;"></div>
<div style="left:1320px;top:508px;width:90px;height:15px;background:#fff;"></div>
<div style="left:544px;top:523px;width:50.5px;height:2px;background:#fff;"></div>
<span class="t" style="left:568.50px;top:511.25px;font-size:11.04px;transform:translateX(-50%) scaleX(0.991);transform-origin:50% 50%;">15</span>
<span class="t" style="left:620.00px;top:511.25px;font-size:11.04px;color:#000;transform:translateX(-50%) scaleX(0.991);transform-origin:50% 50%;">172</span>
<span class="t" style="left:648.00px;top:511.25px;font-size:11.04px;color:#000;transform:scaleX(0.937);transform-origin:0 50%;">RC5931-1</span>
<div style="left:750px;top:509px;width:37.6299px;height:12.5px;background:linear-gradient(90deg,#7f7f7f,#e0e0e0);box-sizing:border-box;border:1px solid #555;"></div>
<span class="t" style="left:838.30px;top:511.25px;font-size:11.04px;color:#000;transform:translateX(-100%) scaleX(1.002);transform-origin:100% 50%;">5.4</span>
<div style="left:842px;top:509.7px;width:12.2px;height:12.2px;background:#595959;border-radius:50%;"></div>
<span class="t" style="left:862.00px;top:511.25px;font-size:11.04px;color:#000;transform:scaleX(0.947);transform-origin:0 50%;">62%</span>
<div style="left:1045px;top:509px;width:6.8px;height:12.5px;background:linear-gradient(90deg,#7f7f7f,#e0e0e0);box-sizing:border-box;border:1px solid #555;border-left:0;"></div>
<span class="t" style="left:1133.00px;top:511.25px;font-size:11.04px;color:#000;transform:translateX(-100%) scaleX(1.002);transform-origin:100% 50%;">1.0</span>
<span class="t" style="left:1181.00px;top:511.25px;font-size:11.04px;color:#000;transform:translateX(-50%) scaleX(0.893);transform-origin:50% 50%;">Location Class 1</span>
<div style="left:1229px;top:509px;width:13.9px;height:12.5px;background:linear-gradient(90deg,#7f7f7f,#e0e0e0);box-sizing:border-box;border:1px solid #555;"></div>
<span class="t" style="left:1317.00px;top:511.25px;font-size:11.04px;color:#000;transform:translateX(-100%) scaleX(1.002);transform-origin:100% 50%;">2.0</span>
<div style="left:595px;top:525px;width:48px;height:15px;background:#fff;"></div>
<div style="left:646px;top:525px;width:101px;height:15px;background:#fff;"></div>
<div style="left:749px;top:525px;width:90px;height:15px;background:#fff;"></div>
<div style="left:842px;top:525px;width:89px;height:15px;background:#fff;"></div>
<div style="left:934px;top:525px;width:89px;height:15px;background:#fff;"></div>
<div style="left:1045px;top:525px;width:89.5px;height:15px;background:#fff;"></div>
<div style="left:1136px;top:525px;width:90px;height:15px;background:#fff;"></div>
<div style="left:1228px;top:525px;width:90.7px;height:15px;background:#fff;"></div>
<div style="left:1320px;top:525px;width:90px;height:15px;background:#fff;"></div>
<div style="left:544px;top:540px;width:50.5px;height:2px;background:#fff;"></div>
<span class="t" style="left:568.50px;top:528.25px;font-size:11.04px;transform:translateX(-50%) scaleX(0.991);transform-origin:50% 50%;">16</span>
<span class="t" style="left:620.00px;top:528.25px;font-size:11.04px;color:#000;transform:translateX(-50%) scaleX(1.025);transform-origin:50% 50%;">211</span>
<span class="t" style="left:648.00px;top:528.25px;font-size:11.04px;color:#000;transform:scaleX(0.937);transform-origin:0 50%;">RC0260-5</span>
<div style="left:750px;top:526px;width:34.1457px;height:12.5px;background:linear-gradient(90deg,#7f7f7f,#e0e0e0);box-sizing:border-box;border:1px solid #555;"></div>
<span class="t" style="left:838.30px;top:528.25px;font-size:11.04px;color:#000;transform:translateX(-100%) scaleX(1.002);transform-origin:100% 50%;">4.9</span>
<div style="left:842px;top:526.7px;width:12.2px;height:12.2px;background:#595959;border-radius:50%;"></div>
<span class="t" style="left:862.00px;top:528.25px;font-size:11.04px;color:#000;transform:scaleX(0.947);transform-origin:0 50%;">45%</span>
<div style="left:1045px;top:526px;width:27.2px;height:12.5px;background:linear-gradient(90deg,#7f7f7f,#e0e0e0);box-sizing:border-box;border:1px solid #555;border-left:0;"></div>
<span class="t" style="left:1133.00px;top:528.25px;font-size:11.04px;color:#000;transform:translateX(-100%) scaleX(1.002);transform-origin:100% 50%;">4.0</span>
<span class="t" style="left:1181.00px;top:528.25px;font-size:11.04px;color:#000;transform:translateX(-50%) scaleX(0.893);transform-origin:50% 50%;">Location Class 3</span>
<div style="left:1229px;top:526px;width:39.615px;height:12.5px;background:linear-gradient(90deg,#7f7f7f,#e0e0e0);box-sizing:border-box;border:1px solid #555;"></div>
<span class="t" style="left:1317.00px;top:528.25px;font-size:11.04px;color:#000;transform:translateX(-100%) scaleX(1.002);transform-origin:100% 50%;">5.7</span>
<div style="left:595px;top:542px;width:48px;height:15px;background:#fff;"></div>
<div style="left:646px;top:542px;width:101px;height:15px;background:#fff;"></div>
<div style="left:749px;top:542px;width:90px;height:15px;background:#fff;"></div>
<div style="left:842px;top:542px;width:89px;height:15px;background:#fff;"></div>
<div style="left:934px;top:542px;width:89px;height:15px;background:#fff;"></div>
<div style="left:1045px;top:542px;width:89.5px;height:15px;background:#fff;"></div>
<div style="left:1136px;top:542px;width:90px;height:15px;background:#fff;"></div>
<div style="left:1228px;top:542px;width:90.7px;height:15px;background:#fff;"></div>
<div style="left:1320px;top:542px;width:90px;height:15px;background:#fff;"></div>
<div style="left:544px;top:557px;width:50.5px;height:2px;background:#fff;"></div>
<span class="t" style="left:568.50px;top:545.25px;font-size:11.04px;transform:translateX(-50%) scaleX(0.991);transform-origin:50% 50%;">17</span>
<span class="t" style="left:620.00px;top:545.25px;font-size:11.04px;color:#000;transform:translateX(-50%) scaleX(0.991);transform-origin:50% 50%;">212</span>
<span class="t" style="left:648.00px;top:545.25px;font-size:11.04px;color:#000;transform:scaleX(0.943);transform-origin:0 50%;">RC4100-17</span>
<div style="left:750px;top:543px;width:33.4488px;height:12.5px;background:linear-gradient(90deg,#7f7f7f,#e0e0e0);box-sizing:border-box;border:1px solid #555;"></div>
<span class="t" style="left:838.30px;top:545.25px;font-size:11.04px;color:#000;transform:translateX(-100%) scaleX(1.002);transform-origin:100% 50%;">4.8</span>
<div style="left:842px;top:543.7px;width:12.2px;height:12.2px;background:#595959;border-radius:50%;"></div>
<span class="t" style="left:862.00px;top:545.25px;font-size:11.04px;color:#000;transform:scaleX(0.947);transform-origin:0 50%;">32%</span>
<div style="left:1045px;top:543px;width:27.2px;height:12.5px;background:linear-gradient(90deg,#7f7f7f,#e0e0e0);box-sizing:border-box;border:1px solid #555;border-left:0;"></div>
<span class="t" style="left:1133.00px;top:545.25px;font-size:11.04px;color:#000;transform:translateX(-100%) scaleX(1.002);transform-origin:100% 50%;">4.0</span>
<span class="t" style="left:1181.00px;top:545.25px;font-size:11.04px;color:#000;transform:translateX(-50%) scaleX(0.893);transform-origin:50% 50%;">Location Class 3</span>
<div style="left:1229px;top:543px;width:34.75px;height:12.5px;background:linear-gradient(90deg,#7f7f7f,#e0e0e0);box-sizing:border-box;border:1px solid #555;"></div>
<span class="t" style="left:1317.00px;top:545.25px;font-size:11.04px;color:#000;transform:translateX(-100%) scaleX(1.002);transform-origin:100% 50%;">5.0</span>
<div style="left:595px;top:559px;width:48px;height:15px;background:#fff;"></div>
<div style="left:646px;top:559px;width:101px;height:15px;background:#fff;"></div>
<div style="left:749px;top:559px;width:90px;height:15px;background:#fff;"></div>
<div style="left:842px;top:559px;width:89px;height:15px;background:#fff;"></div>
<div style="left:934px;top:559px;width:89px;height:15px;background:#fff;"></div>
<div style="left:1045px;top:559px;width:89.5px;height:15px;background:#fff;"></div>
<div style="left:1136px;top:559px;width:90px;height:15px;background:#fff;"></div>
<div style="left:1228px;top:559px;width:90.7px;height:15px;background:#fff;"></div>
<div style="left:1320px;top:559px;width:90px;height:15px;background:#fff;"></div>
<div style="left:544px;top:574px;width:50.5px;height:2px;background:#fff;"></div>
<span class="t" style="left:568.50px;top:562.25px;font-size:11.04px;transform:translateX(-50%) scaleX(0.991);transform-origin:50% 50%;">18</span>
<span class="t" style="left:620.00px;top:562.25px;font-size:11.04px;color:#000;transform:translateX(-50%) scaleX(0.991);transform-origin:50% 50%;">214</span>
<span class="t" style="left:648.00px;top:562.25px;font-size:11.04px;color:#000;transform:scaleX(0.937);transform-origin:0 50%;">RC6540-1</span>
<div style="left:750px;top:560px;width:33.4488px;height:12.5px;background:linear-gradient(90deg,#7f7f7f,#e0e0e0);box-sizing:border-box;border:1px solid #555;"></div>
<span class="t" style="left:838.30px;top:562.25px;font-size:11.04px;color:#000;transform:translateX(-100%) scaleX(1.002);transform-origin:100% 50%;">4.8</span>
<div style="left:842px;top:560.7px;width:12.2px;height:12.2px;background:#595959;border-radius:50%;"></div>
<span class="t" style="left:862.00px;top:562.25px;font-size:11.04px;color:#000;transform:scaleX(0.947);transform-origin:0 50%;">47%</span>
<div style="left:1045px;top:560px;width:6.8px;height:12.5px;background:linear-gradient(90deg,#7f7f7f,#e0e0e0);box-sizing:border-box;border:1px solid #555;border-left:0;"></div>
<span class="t" style="left:1133.00px;top:562.25px;font-size:11.04px;color:#000;transform:translateX(-100%) scaleX(1.002);transform-origin:100% 50%;">1.0</span>
<span class="t" style="left:1181.00px;top:562.25px;font-size:11.04px;color:#000;transform:translateX(-50%) scaleX(0.893);transform-origin:50% 50%;">Location Class 1</span>
<div style="left:1229px;top:560px;width:13.9px;height:12.5px;background:linear-gradient(90deg,#7f7f7f,#e0e0e0);box-sizing:border-box;border:1px solid #555;"></div>
<span class="t" style="left:1317.00px;top:562.25px;font-size:11.04px;color:#000;transform:translateX(-100%) scaleX(1.002);transform-origin:100% 50%;">2.0</span>
<div style="left:595px;top:576px;width:48px;height:15px;background:#fff;"></div>
<div style="left:646px;top:576px;width:101px;height:15px;background:#fff;"></div>
<div style="left:749px;top:576px;width:90px;height:15px;background:#fff;"></div>
<div style="left:842px;top:576px;width:89px;height:15px;background:#fff;"></div>
<div style="left:934px;top:576px;width:89px;height:15px;background:#fff;"></div>
<div style="left:1045px;top:576px;width:89.5px;height:15px;background:#fff;"></div>
<div style="left:1136px;top:576px;width:90px;height:15px;background:#fff;"></div>
<div style="left:1228px;top:576px;width:90.7px;height:15px;background:#fff;"></div>
<div style="left:1320px;top:576px;width:90px;height:15px;background:#fff;"></div>
<div style="left:544px;top:591px;width:50.5px;height:2px;background:#fff;"></div>
<span class="t" style="left:568.50px;top:579.25px;font-size:11.04px;transform:translateX(-50%) scaleX(0.991);transform-origin:50% 50%;">19</span>
<span class="t" style="left:620.00px;top:579.25px;font-size:11.04px;color:#000;transform:translateX(-50%) scaleX(0.991);transform-origin:50% 50%;">265</span>
<span class="t" style="left:648.00px;top:579.25px;font-size:11.04px;color:#000;transform:scaleX(0.937);transform-origin:0 50%;">RC0500-1</span>
<div style="left:750px;top:577px;width:26.4803px;height:12.5px;background:linear-gradient(90deg,#7f7f7f,#e0e0e0);box-sizing:border-box;border:1px solid #555;"></div>
<span class="t" style="left:838.30px;top:579.25px;font-size:11.04px;color:#000;transform:translateX(-100%) scaleX(1.002);transform-origin:100% 50%;">3.8</span>
<div style="left:842px;top:577.7px;width:12.2px;height:12.2px;background:#595959;border-radius:50%;"></div>
<span class="t" style="left:862.00px;top:579.25px;font-size:11.04px;color:#000;transform:scaleX(0.947);transform-origin:0 50%;">35%</span>
<div style="left:1045px;top:577px;width:6.8px;height:12.5px;background:linear-gradient(90deg,#7f7f7f,#e0e0e0);box-sizing:border-box;border:1px solid #555;border-left:0;"></div>
<span class="t" style="left:1133.00px;top:579.25px;font-size:11.04px;color:#000;transform:translateX(-100%) scaleX(1.002);transform-origin:100% 50%;">1.0</span>
<span class="t" style="left:1181.00px;top:579.25px;font-size:11.04px;color:#000;transform:translateX(-50%) scaleX(0.893);transform-origin:50% 50%;">Location Class 1</span>
<div style="left:1229px;top:577px;width:13.9px;height:12.5px;background:linear-gradient(90deg,#7f7f7f,#e0e0e0);box-sizing:border-box;border:1px solid #555;"></div>
<span class="t" style="left:1317.00px;top:579.25px;font-size:11.04px;color:#000;transform:translateX(-100%) scaleX(1.002);transform-origin:100% 50%;">2.0</span>
<div style="left:595px;top:593px;width:48px;height:15px;background:#fff;"></div>
<div style="left:646px;top:593px;width:101px;height:15px;background:#fff;"></div>
<div style="left:749px;top:593px;width:90px;height:15px;background:#fff;"></div>
<div style="left:842px;top:593px;width:89px;height:15px;background:#fff;"></div>
<div style="left:934px;top:593px;width:89px;height:15px;background:#fff;"></div>
<div style="left:1045px;top:593px;width:89.5px;height:15px;background:#fff;"></div>
<div style="left:1136px;top:593px;width:90px;height:15px;background:#fff;"></div>
<div style="left:1228px;top:593px;width:90.7px;height:15px;background:#fff;"></div>
<div style="left:1320px;top:593px;width:90px;height:15px;background:#fff;"></div>
<div style="left:544px;top:608px;width:50.5px;height:2px;background:#fff;"></div>
<span class="t" style="left:568.50px;top:596.25px;font-size:11.04px;transform:translateX(-50%) scaleX(0.991);transform-origin:50% 50%;">20</span>
<span class="t" style="left:620.00px;top:596.25px;font-size:11.04px;color:#000;transform:translateX(-50%) scaleX(0.991);transform-origin:50% 50%;">326</span>
<span class="t" style="left:648.00px;top:596.25px;font-size:11.04px;color:#000;transform:scaleX(0.937);transform-origin:0 50%;">RC0500-9</span>
<div style="left:750px;top:594px;width:22.9961px;height:12.5px;background:linear-gradient(90deg,#7f7f7f,#e0e0e0);box-sizing:border-box;border:1px solid #555;"></div>
<span class="t" style="left:838.30px;top:596.25px;font-size:11.04px;color:#000;transform:translateX(-100%) scaleX(1.002);transform-origin:100% 50%;">3.3</span>
<div style="left:842px;top:594.7px;width:12.2px;height:12.2px;background:#595959;border-radius:50%;"></div>
<span class="t" style="left:862.00px;top:596.25px;font-size:11.04px;color:#000;transform:scaleX(0.947);transform-origin:0 50%;">33%</span>
<div style="left:1045px;top:594px;width:6.8px;height:12.5px;background:linear-gradient(90deg,#7f7f7f,#e0e0e0);box-sizing:border-box;border:1px solid #555;border-left:0;"></div>
<span class="t" style="left:1133.00px;top:596.25px;font-size:11.04px;color:#000;transform:translateX(-100%) scaleX(1.002);transform-origin:100% 50%;">1.0</span>
<span class="t" style="left:1181.00px;top:596.25px;font-size:11.04px;color:#000;transform:translateX(-50%) scaleX(0.893);transform-origin:50% 50%;">Location Class 1</span>
<div style="left:1229px;top:594px;width:13.9px;height:12.5px;background:linear-gradient(90deg,#7f7f7f,#e0e0e0);box-sizing:border-box;border:1px solid #555;"></div>
<span class="t" style="left:1317.00px;top:596.25px;font-size:11.04px;color:#000;transform:translateX(-100%) scaleX(1.002);transform-origin:100% 50%;">2.0</span>
<div style="left:595px;top:610px;width:48px;height:15px;background:#fff;"></div>
<div style="left:646px;top:610px;width:101px;height:15px;background:#fff;"></div>
<div style="left:749px;top:610px;width:90px;height:15px;background:#fff;"></div>
<div style="left:842px;top:610px;width:89px;height:15px;background:#fff;"></div>
<div style="left:934px;top:610px;width:89px;height:15px;background:#fff;"></div>
<div style="left:1045px;top:610px;width:89.5px;height:15px;background:#fff;"></div>
<div style="left:1136px;top:610px;width:90px;height:15px;background:#fff;"></div>
<div style="left:1228px;top:610px;width:90.7px;height:15px;background:#fff;"></div>
<div style="left:1320px;top:610px;width:90px;height:15px;background:#fff;"></div>
<div style="left:544px;top:625px;width:50.5px;height:2px;background:#fff;"></div>
<div style="left:595px;top:627px;width:48px;height:15px;background:#fff;"></div>
<div style="left:646px;top:627px;width:101px;height:15px;background:#fff;"></div>
<div style="left:749px;top:627px;width:90px;height:15px;background:#fff;"></div>
<div style="left:842px;top:627px;width:89px;height:15px;background:#fff;"></div>
<div style="left:934px;top:627px;width:89px;height:15px;background:#fff;"></div>
<div style="left:1045px;top:627px;width:89.5px;height:15px;background:#fff;"></div>
<div style="left:1136px;top:627px;width:90px;height:15px;background:#fff;"></div>
<div style="left:1228px;top:627px;width:90.7px;height:15px;background:#fff;"></div>
<div style="left:1320px;top:627px;width:90px;height:15px;background:#fff;"></div>
<div style="left:544px;top:642px;width:50.5px;height:2px;background:#fff;"></div>
<div style="left:595px;top:644px;width:48px;height:15px;background:#fff;"></div>
<div style="left:646px;top:644px;width:101px;height:15px;background:#fff;"></div>
<div style="left:749px;top:644px;width:90px;height:15px;background:#fff;"></div>
<div style="left:842px;top:644px;width:89px;height:15px;background:#fff;"></div>
<div style="left:934px;top:644px;width:89px;height:15px;background:#fff;"></div>
<div style="left:1045px;top:644px;width:89.5px;height:15px;background:#fff;"></div>
<div style="left:1136px;top:644px;width:90px;height:15px;background:#fff;"></div>
<div style="left:1228px;top:644px;width:90.7px;height:15px;background:#fff;"></div>
<div style="left:1320px;top:644px;width:90px;height:15px;background:#fff;"></div>
<div style="left:544px;top:659px;width:50.5px;height:2px;background:#fff;"></div>
<div style="left:595px;top:661px;width:48px;height:15px;background:#fff;"></div>
<div style="left:646px;top:661px;width:101px;height:15px;background:#fff;"></div>
<div style="left:749px;top:661px;width:90px;height:15px;background:#fff;"></div>
<div style="left:842px;top:661px;width:89px;height:15px;background:#fff;"></div>
<div style="left:934px;top:661px;width:89px;height:15px;background:#fff;"></div>
<div style="left:1045px;top:661px;width:89.5px;height:15px;background:#fff;"></div>
<div style="left:1136px;top:661px;width:90px;height:15px;background:#fff;"></div>
<div style="left:1228px;top:661px;width:90.7px;height:15px;background:#fff;"></div>
<div style="left:1320px;top:661px;width:90px;height:15px;background:#fff;"></div>
<div style="left:544px;top:676px;width:50.5px;height:2px;background:#fff;"></div>
<div style="left:595px;top:678px;width:48px;height:15px;background:#fff;"></div>
<div style="left:646px;top:678px;width:101px;height:15px;background:#fff;"></div>
<div style="left:749px;top:678px;width:90px;height:15px;background:#fff;"></div>
<div style="left:842px;top:678px;width:89px;height:15px;background:#fff;"></div>
<div style="left:934px;top:678px;width:89px;height:15px;background:#fff;"></div>
<div style="left:1045px;top:678px;width:89.5px;height:15px;background:#fff;"></div>
<div style="left:1136px;top:678px;width:90px;height:15px;background:#fff;"></div>
<div style="left:1228px;top:678px;width:90.7px;height:15px;background:#fff;"></div>
<div style="left:1320px;top:678px;width:90px;height:15px;background:#fff;"></div>
<div style="left:544px;top:693px;width:50.5px;height:2px;background:#fff;"></div>
<span class="t" style="left:1089.50px;top:247.95px;font-size:11.04px;transform:translateX(-50%) scaleX(0.964);transform-origin:50% 50%;">Value</span>
<span class="t" style="left:1181.00px;top:247.95px;font-size:11.04px;transform:translateX(-50%) scaleX(0.990);transform-origin:50% 50%;">Input</span>
<span class="t" style="left:1273.00px;top:247.95px;font-size:11.04px;transform:translateX(-50%) scaleX(0.964);transform-origin:50% 50%;">Value</span>
<div style="left:0px;top:243px;width:534px;height:392.8px;background:#fff;box-sizing:border-box;border:2px solid #000;"></div>
<span class="t" style="left:267.40px;top:256.49px;font-size:13.6px;color:#000;transform:translateX(-50%) scaleX(1.069);transform-origin:50% 50%;-webkit-text-stroke:0.35px #000;">Top 20 Onshore Segments by Overall Risk Score (ROF)</span>
<span class="t" style="left:267.40px;top:273.49px;font-size:13.6px;color:#000;transform:translateX(-50%) scaleX(1.072);transform-origin:50% 50%;-webkit-text-stroke:0.35px #000;">Score</span>
<div style="left:33px;top:497.5px;width:490px;height:1px;background:#d9d9d9;"></div>
<span class="t" style="left:25.30px;top:492.65px;font-size:11.04px;font-weight:normal;color:#111;transform:translateX(-100%) scaleX(0.991);transform-origin:100% 50%;">0</span>
<div style="left:33px;top:457.5px;width:490px;height:1px;background:#d9d9d9;"></div>
<span class="t" style="left:25.30px;top:453.17px;font-size:11.04px;font-weight:normal;color:#111;transform:translateX(-100%) scaleX(0.991);transform-origin:100% 50%;">2</span>
<div style="left:33px;top:418.5px;width:490px;height:1px;background:#d9d9d9;"></div>
<span class="t" style="left:25.30px;top:413.69px;font-size:11.04px;font-weight:normal;color:#111;transform:translateX(-100%) scaleX(0.991);transform-origin:100% 50%;">4</span>
<div style="left:33px;top:378.5px;width:490px;height:1px;background:#d9d9d9;"></div>
<span class="t" style="left:25.30px;top:374.21px;font-size:11.04px;font-weight:normal;color:#111;transform:translateX(-100%) scaleX(0.991);transform-origin:100% 50%;">6</span>
<div style="left:33px;top:339.5px;width:490px;height:1px;background:#d9d9d9;"></div>
<span class="t" style="left:25.30px;top:334.73px;font-size:11.04px;font-weight:normal;color:#111;transform:translateX(-100%) scaleX(0.991);transform-origin:100% 50%;">8</span>
<div style="left:33px;top:299.5px;width:490px;height:1px;background:#d9d9d9;"></div>
<span class="t" style="left:25.30px;top:295.25px;font-size:11.04px;font-weight:normal;color:#111;transform:translateX(-100%) scaleX(0.991);transform-origin:100% 50%;">10</span>
<div style="left:39.2px;top:318.811px;width:17.7px;height:85.7707px;background:#7f7f7f;"></div>
<div style="left:39.2px;top:404.582px;width:17.7px;height:92.9183px;background:#696969;"></div>
<div style="left:39.2px;top:404.082px;width:17.7px;height:1px;background:#f2f2f2;"></div>
<span class="t dl" style="left:48.05px;top:325.52px;font-size:9.2px;transform:translateX(-50%) scaleX(0.979);transform-origin:50% 50%;">12.7</span>
<span class="t dl" style="left:48.05px;top:410.79px;font-size:9.2px;transform:translateX(-50%) scaleX(0.928);transform-origin:50% 50%;">52%</span>
<span class="t" style="left:49.25px;top:504.48px;font-size:11.04px;font-weight:normal;color:#1a1a1a;transform:translateX(-100%) rotate(-45deg) scaleX(0.988);transform-origin:100% 50%;">RC099-11</span>
<div style="left:63.49px;top:318.811px;width:17.7px;height:85.7707px;background:#7f7f7f;"></div>
<div style="left:63.49px;top:404.582px;width:17.7px;height:92.9183px;background:#696969;"></div>
<div style="left:63.49px;top:404.082px;width:17.7px;height:1px;background:#f2f2f2;"></div>
<span class="t dl" style="left:72.34px;top:325.52px;font-size:9.2px;transform:translateX(-50%) scaleX(0.979);transform-origin:50% 50%;">12.7</span>
<span class="t dl" style="left:72.34px;top:410.79px;font-size:9.2px;transform:translateX(-50%) scaleX(0.928);transform-origin:50% 50%;">52%</span>
<span class="t" style="left:73.54px;top:504.48px;font-size:11.04px;font-weight:normal;color:#1a1a1a;transform:translateX(-100%) rotate(-45deg) scaleX(0.971);transform-origin:100% 50%;">RC099-12</span>
<div style="left:87.78px;top:321.625px;width:17.7px;height:82.6612px;background:#7f7f7f;"></div>
<div style="left:87.78px;top:404.286px;width:17.7px;height:93.2138px;background:#696969;"></div>
<div style="left:87.78px;top:403.786px;width:17.7px;height:1px;background:#f2f2f2;"></div>
<span class="t dl" style="left:96.63px;top:328.34px;font-size:9.2px;transform:translateX(-50%) scaleX(0.979);transform-origin:50% 50%;">12.5</span>
<span class="t dl" style="left:96.63px;top:410.50px;font-size:9.2px;transform:translateX(-50%) scaleX(0.928);transform-origin:50% 50%;">53%</span>
<span class="t" style="left:97.83px;top:504.48px;font-size:11.04px;font-weight:normal;color:#1a1a1a;transform:translateX(-100%) rotate(-45deg) scaleX(0.971);transform-origin:100% 50%;">RC099-13</span>
<div style="left:112.07px;top:324.58px;width:17.7px;height:74.0099px;background:#7f7f7f;"></div>
<div style="left:112.07px;top:398.59px;width:17.7px;height:98.9104px;background:#696969;"></div>
<div style="left:112.07px;top:398.09px;width:17.7px;height:1px;background:#f2f2f2;"></div>
<span class="t dl" style="left:120.92px;top:331.29px;font-size:9.2px;transform:translateX(-50%) scaleX(0.979);transform-origin:50% 50%;">12.3</span>
<span class="t dl" style="left:120.92px;top:404.80px;font-size:9.2px;transform:translateX(-50%) scaleX(0.928);transform-origin:50% 50%;">58%</span>
<span class="t" style="left:122.12px;top:504.48px;font-size:11.04px;font-weight:normal;color:#1a1a1a;transform:translateX(-100%) rotate(-45deg) scaleX(0.983);transform-origin:100% 50%;">RC01313-14</span>
<div style="left:136.36px;top:324.58px;width:17.7px;height:74.0099px;background:#7f7f7f;"></div>
<div style="left:136.36px;top:398.59px;width:17.7px;height:98.9104px;background:#696969;"></div>
<div style="left:136.36px;top:398.09px;width:17.7px;height:1px;background:#f2f2f2;"></div>
<span class="t dl" style="left:145.21px;top:331.29px;font-size:9.2px;transform:translateX(-50%) scaleX(0.979);transform-origin:50% 50%;">12.3</span>
<span class="t dl" style="left:145.21px;top:404.80px;font-size:9.2px;transform:translateX(-50%) scaleX(0.928);transform-origin:50% 50%;">58%</span>
<span class="t" style="left:146.41px;top:504.48px;font-size:11.04px;font-weight:normal;color:#1a1a1a;transform:translateX(-100%) rotate(-45deg) scaleX(0.983);transform-origin:100% 50%;">RC01313-15</span>
<div style="left:160.65px;top:324.58px;width:17.7px;height:74.0099px;background:#7f7f7f;"></div>
<div style="left:160.65px;top:398.59px;width:17.7px;height:98.9104px;background:#696969;"></div>
<div style="left:160.65px;top:398.09px;width:17.7px;height:1px;background:#f2f2f2;"></div>
<span class="t dl" style="left:169.50px;top:331.29px;font-size:9.2px;transform:translateX(-50%) scaleX(0.979);transform-origin:50% 50%;">12.3</span>
<span class="t dl" style="left:169.50px;top:404.80px;font-size:9.2px;transform:translateX(-50%) scaleX(0.928);transform-origin:50% 50%;">58%</span>
<span class="t" style="left:170.70px;top:504.48px;font-size:11.04px;font-weight:normal;color:#1a1a1a;transform:translateX(-100%) rotate(-45deg) scaleX(0.983);transform-origin:100% 50%;">RC01313-16</span>
<div style="left:184.94px;top:368.056px;width:17.7px;height:80.2553px;background:#7f7f7f;"></div>
<div style="left:184.94px;top:448.311px;width:17.7px;height:49.1887px;background:#696969;"></div>
<div style="left:184.94px;top:447.811px;width:17.7px;height:1px;background:#f2f2f2;"></div>
<span class="t dl" style="left:193.79px;top:374.77px;font-size:9.2px;transform:translateX(-50%) scaleX(0.982);transform-origin:50% 50%;">9.2</span>
<span class="t dl" style="left:193.79px;top:454.52px;font-size:9.2px;transform:translateX(-50%) scaleX(0.928);transform-origin:50% 50%;">38%</span>
<span class="t" style="left:194.99px;top:504.48px;font-size:11.04px;font-weight:normal;color:#1a1a1a;transform:translateX(-100%) rotate(-45deg) scaleX(0.983);transform-origin:100% 50%;">RC04141-17</span>
<div style="left:209.23px;top:373.684px;width:17.7px;height:82.9567px;background:#7f7f7f;"></div>
<div style="left:209.23px;top:456.641px;width:17.7px;height:40.8593px;background:#696969;"></div>
<div style="left:209.23px;top:456.141px;width:17.7px;height:1px;background:#f2f2f2;"></div>
<span class="t dl" style="left:218.08px;top:380.40px;font-size:9.2px;transform:translateX(-50%) scaleX(0.982);transform-origin:50% 50%;">8.8</span>
<span class="t dl" style="left:218.08px;top:462.85px;font-size:9.2px;transform:translateX(-50%) scaleX(0.928);transform-origin:50% 50%;">33%</span>
<span class="t" style="left:219.28px;top:504.48px;font-size:11.04px;font-weight:normal;color:#1a1a1a;transform:translateX(-100%) rotate(-45deg) scaleX(0.983);transform-origin:100% 50%;">RC04848-18</span>
<div style="left:233.52px;top:377.905px;width:17.7px;height:81.3246px;background:#7f7f7f;"></div>
<div style="left:233.52px;top:459.23px;width:17.7px;height:38.2704px;background:#696969;"></div>
<div style="left:233.52px;top:458.73px;width:17.7px;height:1px;background:#f2f2f2;"></div>
<span class="t dl" style="left:242.37px;top:384.62px;font-size:9.2px;transform:translateX(-50%) scaleX(0.982);transform-origin:50% 50%;">8.5</span>
<span class="t dl" style="left:242.37px;top:465.44px;font-size:9.2px;transform:translateX(-50%) scaleX(0.928);transform-origin:50% 50%;">32%</span>
<span class="t" style="left:243.57px;top:504.48px;font-size:11.04px;font-weight:normal;color:#1a1a1a;transform:translateX(-100%) rotate(-45deg) scaleX(0.983);transform-origin:100% 50%;">RC05353-19</span>
<div style="left:257.81px;top:396.196px;width:17.7px;height:68.8867px;background:#7f7f7f;"></div>
<div style="left:257.81px;top:465.083px;width:17.7px;height:32.4173px;background:#696969;"></div>
<div style="left:257.81px;top:464.583px;width:17.7px;height:1px;background:#f2f2f2;"></div>
<span class="t dl" style="left:266.66px;top:402.91px;font-size:9.2px;transform:translateX(-50%) scaleX(0.982);transform-origin:50% 50%;">7.2</span>
<span class="t dl" style="left:266.66px;top:471.29px;font-size:9.2px;transform:translateX(-50%) scaleX(0.928);transform-origin:50% 50%;">32%</span>
<span class="t" style="left:267.86px;top:504.48px;font-size:11.04px;font-weight:normal;color:#1a1a1a;transform:translateX(-100%) rotate(-45deg) scaleX(1.000);transform-origin:100% 50%;">RC08282-110</span>
<div style="left:282.1px;top:404.638px;width:17.7px;height:61.2889px;background:#7f7f7f;"></div>
<div style="left:282.1px;top:465.927px;width:17.7px;height:31.5731px;background:#696969;"></div>
<div style="left:282.1px;top:465.427px;width:17.7px;height:1px;background:#f2f2f2;"></div>
<span class="t dl" style="left:290.95px;top:411.35px;font-size:9.2px;transform:translateX(-50%) scaleX(0.982);transform-origin:50% 50%;">6.6</span>
<span class="t dl" style="left:290.95px;top:472.14px;font-size:9.2px;transform:translateX(-50%) scaleX(0.928);transform-origin:50% 50%;">34%</span>
<span class="t" style="left:292.15px;top:504.48px;font-size:11.04px;font-weight:normal;color:#1a1a1a;transform:translateX(-100%) rotate(-45deg) scaleX(1.015);transform-origin:100% 50%;">RC0109109-111</span>
<div style="left:306.39px;top:404.638px;width:17.7px;height:61.2889px;background:#7f7f7f;"></div>
<div style="left:306.39px;top:465.927px;width:17.7px;height:31.5731px;background:#696969;"></div>
<div style="left:306.39px;top:465.427px;width:17.7px;height:1px;background:#f2f2f2;"></div>
<span class="t dl" style="left:315.24px;top:411.35px;font-size:9.2px;transform:translateX(-50%) scaleX(0.982);transform-origin:50% 50%;">6.6</span>
<span class="t dl" style="left:315.24px;top:472.14px;font-size:9.2px;transform:translateX(-50%) scaleX(0.928);transform-origin:50% 50%;">34%</span>
<span class="t" style="left:316.44px;top:504.48px;font-size:11.04px;font-weight:normal;color:#1a1a1a;transform:translateX(-100%) rotate(-45deg) scaleX(1.026);transform-origin:100% 50%;">RC0110110-112</span>
<div style="left:330.68px;top:416.738px;width:17.7px;height:50.0723px;background:#7f7f7f;"></div>
<div style="left:330.68px;top:466.811px;width:17.7px;height:30.6895px;background:#696969;"></div>
<div style="left:330.68px;top:466.311px;width:17.7px;height:1px;background:#f2f2f2;"></div>
<span class="t dl" style="left:339.53px;top:423.45px;font-size:9.2px;transform:translateX(-50%) scaleX(0.982);transform-origin:50% 50%;">5.7</span>
<span class="t dl" style="left:339.53px;top:473.02px;font-size:9.2px;transform:translateX(-50%) scaleX(0.928);transform-origin:50% 50%;">38%</span>
<span class="t" style="left:340.73px;top:504.48px;font-size:11.04px;font-weight:normal;color:#1a1a1a;transform:translateX(-100%) rotate(-45deg) scaleX(1.005);transform-origin:100% 50%;">RC0157157-113</span>
<div style="left:354.97px;top:417.864px;width:17.7px;height:48.1799px;background:#7f7f7f;"></div>
<div style="left:354.97px;top:466.044px;width:17.7px;height:31.4563px;background:#696969;"></div>
<div style="left:354.97px;top:465.544px;width:17.7px;height:1px;background:#f2f2f2;"></div>
<span class="t dl" style="left:363.82px;top:424.58px;font-size:9.2px;transform:translateX(-50%) scaleX(0.982);transform-origin:50% 50%;">5.7</span>
<span class="t dl" style="left:363.82px;top:472.26px;font-size:9.2px;transform:translateX(-50%) scaleX(0.928);transform-origin:50% 50%;">39%</span>
<span class="t" style="left:365.02px;top:504.48px;font-size:11.04px;font-weight:normal;color:#1a1a1a;transform:translateX(-100%) rotate(-45deg) scaleX(1.005);transform-origin:100% 50%;">RC0160160-114</span>
<div style="left:379.26px;top:421.944px;width:17.7px;height:29.4668px;background:#7f7f7f;"></div>
<div style="left:379.26px;top:451.411px;width:17.7px;height:46.0891px;background:#696969;"></div>
<div style="left:379.26px;top:450.911px;width:17.7px;height:1px;background:#f2f2f2;"></div>
<span class="t dl" style="left:388.11px;top:428.66px;font-size:9.2px;transform:translateX(-50%) scaleX(0.982);transform-origin:50% 50%;">5.4</span>
<span class="t dl" style="left:388.11px;top:457.62px;font-size:9.2px;transform:translateX(-50%) scaleX(0.928);transform-origin:50% 50%;">62%</span>
<span class="t" style="left:389.31px;top:504.48px;font-size:11.04px;font-weight:normal;color:#1a1a1a;transform:translateX(-100%) rotate(-45deg) scaleX(1.005);transform-origin:100% 50%;">RC0172172-115</span>
<div style="left:403.55px;top:428.979px;width:17.7px;height:37.0013px;background:#7f7f7f;"></div>
<div style="left:403.55px;top:465.98px;width:17.7px;height:31.5196px;background:#696969;"></div>
<div style="left:403.55px;top:465.48px;width:17.7px;height:1px;background:#f2f2f2;"></div>
<span class="t dl" style="left:412.40px;top:435.69px;font-size:9.2px;transform:translateX(-50%) scaleX(0.982);transform-origin:50% 50%;">4.9</span>
<span class="t dl" style="left:412.40px;top:472.19px;font-size:9.2px;transform:translateX(-50%) scaleX(0.928);transform-origin:50% 50%;">45%</span>
<span class="t" style="left:413.60px;top:504.48px;font-size:11.04px;font-weight:normal;color:#1a1a1a;transform:translateX(-100%) rotate(-45deg) scaleX(1.026);transform-origin:100% 50%;">RC0211211-116</span>
<div style="left:427.84px;top:429.964px;width:17.7px;height:45.2491px;background:#7f7f7f;"></div>
<div style="left:427.84px;top:475.213px;width:17.7px;height:22.2869px;background:#696969;"></div>
<div style="left:427.84px;top:474.713px;width:17.7px;height:1px;background:#f2f2f2;"></div>
<span class="t dl" style="left:436.69px;top:436.68px;font-size:9.2px;transform:translateX(-50%) scaleX(0.982);transform-origin:50% 50%;">4.8</span>
<span class="t dl" style="left:436.69px;top:481.43px;font-size:9.2px;transform:translateX(-50%) scaleX(0.928);transform-origin:50% 50%;">32%</span>
<span class="t" style="left:437.89px;top:504.48px;font-size:11.04px;font-weight:normal;color:#1a1a1a;transform:translateX(-100%) rotate(-45deg) scaleX(1.005);transform-origin:100% 50%;">RC0212212-117</span>
<div style="left:452.13px;top:430.949px;width:17.7px;height:35.4717px;background:#7f7f7f;"></div>
<div style="left:452.13px;top:466.421px;width:17.7px;height:31.0794px;background:#696969;"></div>
<div style="left:452.13px;top:465.921px;width:17.7px;height:1px;background:#f2f2f2;"></div>
<span class="t dl" style="left:460.98px;top:437.66px;font-size:9.2px;transform:translateX(-50%) scaleX(0.982);transform-origin:50% 50%;">4.8</span>
<span class="t dl" style="left:460.98px;top:472.63px;font-size:9.2px;transform:translateX(-50%) scaleX(0.928);transform-origin:50% 50%;">48%</span>
<span class="t" style="left:462.18px;top:504.48px;font-size:11.04px;font-weight:normal;color:#1a1a1a;transform:translateX(-100%) rotate(-45deg) scaleX(1.005);transform-origin:100% 50%;">RC0214214-118</span>
<div style="left:476.42px;top:445.019px;width:17.7px;height:34.1127px;background:#7f7f7f;"></div>
<div style="left:476.42px;top:479.132px;width:17.7px;height:18.3684px;background:#696969;"></div>
<div style="left:476.42px;top:478.632px;width:17.7px;height:1px;background:#f2f2f2;"></div>
<span class="t dl" style="left:485.27px;top:451.73px;font-size:9.2px;transform:translateX(-50%) scaleX(0.982);transform-origin:50% 50%;">3.8</span>
<span class="t dl" style="left:485.27px;top:482.71px;font-size:9.2px;transform:translateX(-50%) scaleX(0.928);transform-origin:50% 50%;">35%</span>
<span class="t" style="left:486.47px;top:504.48px;font-size:11.04px;font-weight:normal;color:#1a1a1a;transform:translateX(-100%) rotate(-45deg) scaleX(1.005);transform-origin:100% 50%;">RC0265265-119</span>
<div style="left:500.71px;top:452.054px;width:17.7px;height:29.9944px;background:#7f7f7f;"></div>
<div style="left:500.71px;top:482.048px;width:17.7px;height:15.4517px;background:#696969;"></div>
<div style="left:500.71px;top:481.548px;width:17.7px;height:1px;background:#f2f2f2;"></div>
<span class="t dl" style="left:509.56px;top:458.77px;font-size:9.2px;transform:translateX(-50%) scaleX(0.982);transform-origin:50% 50%;">3.3</span>
<span class="t dl" style="left:509.56px;top:482.71px;font-size:9.2px;transform:translateX(-50%) scaleX(0.928);transform-origin:50% 50%;">33%</span>
<span class="t" style="left:510.76px;top:504.48px;font-size:11.04px;font-weight:normal;color:#1a1a1a;transform:translateX(-100%) rotate(-45deg) scaleX(0.995);transform-origin:100% 50%;">RC0326326-120</span>
<div style="left:7px;top:591.2px;width:6px;height:6.3px;background:#a5591f;"></div>
<span class="t" style="left:16.40px;top:590.43px;font-size:10.12px;font-weight:normal;color:#222;transform:scaleX(1.002);transform-origin:0 50%;">External Corrosion</span>
<div style="left:140px;top:591.2px;width:6px;height:6.3px;background:#2a4b8d;"></div>
<span class="t" style="left:149.40px;top:590.43px;font-size:10.12px;font-weight:normal;color:#222;transform:scaleX(1.023);transform-origin:0 50%;">Environmental</span>
<div style="left:274px;top:591.2px;width:6px;height:6.3px;background:#9c8f4e;"></div>
<span class="t" style="left:283.40px;top:590.43px;font-size:10.12px;font-weight:normal;color:#222;transform:scaleX(1.022);transform-origin:0 50%;">Internal Corrosion</span>
<div style="left:406px;top:591.2px;width:6px;height:6.3px;background:#c0509a;"></div>
<span class="t" style="left:415.40px;top:590.43px;font-size:10.12px;font-weight:normal;color:#222;transform:scaleX(1.022);transform-origin:0 50%;">Incorrect Operations</span>
<div style="left:7px;top:612.4px;width:6px;height:6.3px;background:#8c1014;"></div>
<span class="t" style="left:16.40px;top:610.73px;font-size:10.12px;font-weight:normal;color:#222;transform:scaleX(0.972);transform-origin:0 50%;">Stress Corrosion Cracking</span>
<div style="left:140px;top:612.4px;width:6px;height:6.3px;background:#3593a8;"></div>
<span class="t" style="left:149.40px;top:610.73px;font-size:10.12px;font-weight:normal;color:#222;transform:scaleX(1.018);transform-origin:0 50%;">Third Party Interference</span>
<div style="left:274px;top:612.4px;width:6px;height:6.3px;background:#7f7f7f;"></div>
<span class="t" style="left:283.40px;top:610.73px;font-size:10.12px;font-weight:normal;color:#222;transform:scaleX(0.975);transform-origin:0 50%;">Consequence of Risk</span>
<div style="left:1438px;top:239px;width:500px;height:401px;background:#fff;box-sizing:border-box;border:2px solid #000;"></div>
<span class="t" style="left:1493.10px;top:250.79px;font-size:13.6px;color:#000;transform:scaleX(1.080);transform-origin:0 50%;-webkit-text-stroke:0.35px #000;">Overall Risk Scores for the Top 20 Onshore Segments</span>
<span class="t" style="left:1563.50px;top:267.69px;font-size:13.6px;color:#000;transform:scaleX(1.059);transform-origin:0 50%;-webkit-text-stroke:0.35px #000;">by Overall Risk Score (ROF) Score</span>
<div style="left:1472px;top:561.5px;width:420px;height:1px;background:#d9d9d9;"></div>
<span class="t" style="left:1461.00px;top:557.15px;font-size:11.04px;color:#222;transform:translateX(-100%) scaleX(0.991);transform-origin:100% 50%;">0</span>
<div style="left:1472px;top:523.5px;width:420px;height:1px;background:#d9d9d9;"></div>
<span class="t" style="left:1461.00px;top:519.15px;font-size:11.04px;color:#222;transform:translateX(-100%) scaleX(0.991);transform-origin:100% 50%;">2</span>
<div style="left:1472px;top:485.5px;width:420px;height:1px;background:#d9d9d9;"></div>
<span class="t" style="left:1461.00px;top:481.15px;font-size:11.04px;color:#222;transform:translateX(-100%) scaleX(0.991);transform-origin:100% 50%;">4</span>
<div style="left:1472px;top:447.5px;width:420px;height:1px;background:#d9d9d9;"></div>
<span class="t" style="left:1461.00px;top:443.15px;font-size:11.04px;color:#222;transform:translateX(-100%) scaleX(0.991);transform-origin:100% 50%;">6</span>
<div style="left:1472px;top:409.5px;width:420px;height:1px;background:#d9d9d9;"></div>
<span class="t" style="left:1461.00px;top:405.15px;font-size:11.04px;color:#222;transform:translateX(-100%) scaleX(0.991);transform-origin:100% 50%;">8</span>
<div style="left:1472px;top:371.5px;width:420px;height:1px;background:#d9d9d9;"></div>
<span class="t" style="left:1461.00px;top:367.15px;font-size:11.04px;color:#222;transform:translateX(-100%) scaleX(0.991);transform-origin:100% 50%;">10</span>
<div style="left:1472px;top:333.5px;width:420px;height:1px;background:#d9d9d9;"></div>
<span class="t" style="left:1461.00px;top:329.15px;font-size:11.04px;color:#222;transform:translateX(-100%) scaleX(0.991);transform-origin:100% 50%;">12</span>
<div style="left:1472px;top:295.5px;width:420px;height:1px;background:#d9d9d9;"></div>
<span class="t" style="left:1461.00px;top:291.15px;font-size:11.04px;color:#222;transform:translateX(-100%) scaleX(0.991);transform-origin:100% 50%;">14</span>
<div style="left:1475.3px;top:321.1px;width:15.8px;height:115.824px;background:#c00000;"></div>
<div style="left:1475.3px;top:436.924px;width:15.8px;height:125.476px;background:#9b1b1b;"></div>
<div style="left:1475.3px;top:436.424px;width:15.8px;height:1px;background:#f2dcdb;"></div>
<span class="t dl" style="left:1483.20px;top:327.81px;font-size:9.2px;transform:translateX(-50%) scaleX(0.979);transform-origin:50% 50%;">12.7</span>
<span class="t dl" style="left:1483.20px;top:443.14px;font-size:9.2px;transform:translateX(-50%) scaleX(0.928);transform-origin:50% 50%;">52%</span>
<div style="left:1497.24px;top:321.1px;width:15.8px;height:115.824px;background:#c00000;"></div>
<div style="left:1497.24px;top:436.924px;width:15.8px;height:125.476px;background:#9b1b1b;"></div>
<div style="left:1497.24px;top:436.424px;width:15.8px;height:1px;background:#f2dcdb;"></div>
<span class="t dl" style="left:1505.14px;top:327.81px;font-size:9.2px;transform:translateX(-50%) scaleX(0.979);transform-origin:50% 50%;">12.7</span>
<span class="t dl" style="left:1505.14px;top:443.14px;font-size:9.2px;transform:translateX(-50%) scaleX(0.928);transform-origin:50% 50%;">52%</span>
<div style="left:1519.18px;top:324.9px;width:15.8px;height:111.625px;background:#c00000;"></div>
<div style="left:1519.18px;top:436.525px;width:15.8px;height:125.875px;background:#9b1b1b;"></div>
<div style="left:1519.18px;top:436.025px;width:15.8px;height:1px;background:#f2dcdb;"></div>
<span class="t dl" style="left:1527.08px;top:331.61px;font-size:9.2px;transform:translateX(-50%) scaleX(0.979);transform-origin:50% 50%;">12.5</span>
<span class="t dl" style="left:1527.08px;top:442.74px;font-size:9.2px;transform:translateX(-50%) scaleX(0.928);transform-origin:50% 50%;">53%</span>
<div style="left:1541.12px;top:328.89px;width:15.8px;height:99.9423px;background:#c00000;"></div>
<div style="left:1541.12px;top:428.832px;width:15.8px;height:133.568px;background:#9b1b1b;"></div>
<div style="left:1541.12px;top:428.332px;width:15.8px;height:1px;background:#f2dcdb;"></div>
<span class="t dl" style="left:1549.02px;top:335.60px;font-size:9.2px;transform:translateX(-50%) scaleX(0.979);transform-origin:50% 50%;">12.3</span>
<span class="t dl" style="left:1549.02px;top:435.04px;font-size:9.2px;transform:translateX(-50%) scaleX(0.928);transform-origin:50% 50%;">58%</span>
<div style="left:1563.06px;top:328.89px;width:15.8px;height:99.9423px;background:#c00000;"></div>
<div style="left:1563.06px;top:428.832px;width:15.8px;height:133.568px;background:#9b1b1b;"></div>
<div style="left:1563.06px;top:428.332px;width:15.8px;height:1px;background:#f2dcdb;"></div>
<span class="t dl" style="left:1570.96px;top:335.60px;font-size:9.2px;transform:translateX(-50%) scaleX(0.979);transform-origin:50% 50%;">12.3</span>
<span class="t dl" style="left:1570.96px;top:435.04px;font-size:9.2px;transform:translateX(-50%) scaleX(0.928);transform-origin:50% 50%;">58%</span>
<div style="left:1585px;top:328.89px;width:15.8px;height:99.9423px;background:#c00000;"></div>
<div style="left:1585px;top:428.832px;width:15.8px;height:133.568px;background:#9b1b1b;"></div>
<div style="left:1585px;top:428.332px;width:15.8px;height:1px;background:#f2dcdb;"></div>
<span class="t dl" style="left:1592.90px;top:335.60px;font-size:9.2px;transform:translateX(-50%) scaleX(0.979);transform-origin:50% 50%;">12.3</span>
<span class="t dl" style="left:1592.90px;top:435.04px;font-size:9.2px;transform:translateX(-50%) scaleX(0.928);transform-origin:50% 50%;">58%</span>
<div style="left:1606.94px;top:387.6px;width:15.8px;height:108.376px;background:#c00000;"></div>
<div style="left:1606.94px;top:495.976px;width:15.8px;height:66.424px;background:#9b1b1b;"></div>
<div style="left:1606.94px;top:495.476px;width:15.8px;height:1px;background:#f2dcdb;"></div>
<span class="t dl" style="left:1614.84px;top:394.31px;font-size:9.2px;transform:translateX(-50%) scaleX(0.982);transform-origin:50% 50%;">9.2</span>
<span class="t dl" style="left:1614.84px;top:502.19px;font-size:9.2px;transform:translateX(-50%) scaleX(0.928);transform-origin:50% 50%;">38%</span>
<div style="left:1628.88px;top:395.2px;width:15.8px;height:112.024px;background:#c00000;"></div>
<div style="left:1628.88px;top:507.224px;width:15.8px;height:55.176px;background:#9b1b1b;"></div>
<div style="left:1628.88px;top:506.724px;width:15.8px;height:1px;background:#f2dcdb;"></div>
<span class="t dl" style="left:1636.78px;top:401.91px;font-size:9.2px;transform:translateX(-50%) scaleX(0.982);transform-origin:50% 50%;">8.8</span>
<span class="t dl" style="left:1636.78px;top:513.44px;font-size:9.2px;transform:translateX(-50%) scaleX(0.928);transform-origin:50% 50%;">33%</span>
<div style="left:1650.82px;top:400.9px;width:15.8px;height:109.82px;background:#c00000;"></div>
<div style="left:1650.82px;top:510.72px;width:15.8px;height:51.68px;background:#9b1b1b;"></div>
<div style="left:1650.82px;top:510.22px;width:15.8px;height:1px;background:#f2dcdb;"></div>
<span class="t dl" style="left:1658.72px;top:407.61px;font-size:9.2px;transform:translateX(-50%) scaleX(0.982);transform-origin:50% 50%;">8.5</span>
<span class="t dl" style="left:1658.72px;top:516.93px;font-size:9.2px;transform:translateX(-50%) scaleX(0.928);transform-origin:50% 50%;">32%</span>
<div style="left:1672.76px;top:425.6px;width:15.8px;height:93.024px;background:#c00000;"></div>
<div style="left:1672.76px;top:518.624px;width:15.8px;height:43.776px;background:#9b1b1b;"></div>
<div style="left:1672.76px;top:518.124px;width:15.8px;height:1px;background:#f2dcdb;"></div>
<span class="t dl" style="left:1680.66px;top:432.31px;font-size:9.2px;transform:translateX(-50%) scaleX(0.982);transform-origin:50% 50%;">7.2</span>
<span class="t dl" style="left:1680.66px;top:524.84px;font-size:9.2px;transform:translateX(-50%) scaleX(0.928);transform-origin:50% 50%;">32%</span>
<div style="left:1694.7px;top:437px;width:15.8px;height:82.764px;background:#c00000;"></div>
<div style="left:1694.7px;top:519.764px;width:15.8px;height:42.636px;background:#9b1b1b;"></div>
<div style="left:1694.7px;top:519.264px;width:15.8px;height:1px;background:#f2dcdb;"></div>
<span class="t dl" style="left:1702.60px;top:443.71px;font-size:9.2px;transform:translateX(-50%) scaleX(0.982);transform-origin:50% 50%;">6.6</span>
<span class="t dl" style="left:1702.60px;top:525.98px;font-size:9.2px;transform:translateX(-50%) scaleX(0.928);transform-origin:50% 50%;">34%</span>
<div style="left:1716.64px;top:437px;width:15.8px;height:82.764px;background:#c00000;"></div>
<div style="left:1716.64px;top:519.764px;width:15.8px;height:42.636px;background:#9b1b1b;"></div>
<div style="left:1716.64px;top:519.264px;width:15.8px;height:1px;background:#f2dcdb;"></div>
<span class="t dl" style="left:1724.54px;top:443.71px;font-size:9.2px;transform:translateX(-50%) scaleX(0.982);transform-origin:50% 50%;">6.6</span>
<span class="t dl" style="left:1724.54px;top:525.98px;font-size:9.2px;transform:translateX(-50%) scaleX(0.928);transform-origin:50% 50%;">34%</span>
<div style="left:1738.58px;top:453.34px;width:15.8px;height:67.6172px;background:#c00000;"></div>
<div style="left:1738.58px;top:520.957px;width:15.8px;height:41.4428px;background:#9b1b1b;"></div>
<div style="left:1738.58px;top:520.457px;width:15.8px;height:1px;background:#f2dcdb;"></div>
<span class="t dl" style="left:1746.48px;top:460.05px;font-size:9.2px;transform:translateX(-50%) scaleX(0.982);transform-origin:50% 50%;">5.7</span>
<span class="t dl" style="left:1746.48px;top:527.17px;font-size:9.2px;transform:translateX(-50%) scaleX(0.928);transform-origin:50% 50%;">38%</span>
<div style="left:1760.52px;top:454.86px;width:15.8px;height:65.0617px;background:#c00000;"></div>
<div style="left:1760.52px;top:519.922px;width:15.8px;height:42.4783px;background:#9b1b1b;"></div>
<div style="left:1760.52px;top:519.422px;width:15.8px;height:1px;background:#f2dcdb;"></div>
<span class="t dl" style="left:1768.42px;top:461.57px;font-size:9.2px;transform:translateX(-50%) scaleX(0.982);transform-origin:50% 50%;">5.7</span>
<span class="t dl" style="left:1768.42px;top:526.13px;font-size:9.2px;transform:translateX(-50%) scaleX(0.928);transform-origin:50% 50%;">39%</span>
<div style="left:1782.46px;top:460.37px;width:15.8px;height:39.7917px;background:#c00000;"></div>
<div style="left:1782.46px;top:500.162px;width:15.8px;height:62.2383px;background:#9b1b1b;"></div>
<div style="left:1782.46px;top:499.662px;width:15.8px;height:1px;background:#f2dcdb;"></div>
<span class="t dl" style="left:1790.36px;top:467.08px;font-size:9.2px;transform:translateX(-50%) scaleX(0.982);transform-origin:50% 50%;">5.4</span>
<span class="t dl" style="left:1790.36px;top:506.37px;font-size:9.2px;transform:translateX(-50%) scaleX(0.928);transform-origin:50% 50%;">62%</span>
<div style="left:1804.4px;top:469.87px;width:15.8px;height:49.9662px;background:#c00000;"></div>
<div style="left:1804.4px;top:519.836px;width:15.8px;height:42.5638px;background:#9b1b1b;"></div>
<div style="left:1804.4px;top:519.336px;width:15.8px;height:1px;background:#f2dcdb;"></div>
<span class="t dl" style="left:1812.30px;top:476.58px;font-size:9.2px;transform:translateX(-50%) scaleX(0.982);transform-origin:50% 50%;">4.9</span>
<span class="t dl" style="left:1812.30px;top:526.05px;font-size:9.2px;transform:translateX(-50%) scaleX(0.928);transform-origin:50% 50%;">45%</span>
<div style="left:1826.34px;top:471.2px;width:15.8px;height:61.104px;background:#c00000;"></div>
<div style="left:1826.34px;top:532.304px;width:15.8px;height:30.096px;background:#9b1b1b;"></div>
<div style="left:1826.34px;top:531.804px;width:15.8px;height:1px;background:#f2dcdb;"></div>
<span class="t dl" style="left:1834.24px;top:477.91px;font-size:9.2px;transform:translateX(-50%) scaleX(0.982);transform-origin:50% 50%;">4.8</span>
<span class="t dl" style="left:1834.24px;top:538.52px;font-size:9.2px;transform:translateX(-50%) scaleX(0.928);transform-origin:50% 50%;">32%</span>
<div style="left:1848.28px;top:472.53px;width:15.8px;height:47.9007px;background:#c00000;"></div>
<div style="left:1848.28px;top:520.431px;width:15.8px;height:41.9693px;background:#9b1b1b;"></div>
<div style="left:1848.28px;top:519.931px;width:15.8px;height:1px;background:#f2dcdb;"></div>
<span class="t dl" style="left:1856.18px;top:479.24px;font-size:9.2px;transform:translateX(-50%) scaleX(0.982);transform-origin:50% 50%;">4.8</span>
<span class="t dl" style="left:1856.18px;top:526.64px;font-size:9.2px;transform:translateX(-50%) scaleX(0.928);transform-origin:50% 50%;">48%</span>
<span class="t" style="left:1485.70px;top:568.48px;font-size:11.04px;color:#111;transform:translateX(-100%) rotate(-45deg) scaleX(0.948);transform-origin:100% 50%;">RC099-11</span>
<span class="t" style="left:1507.64px;top:568.48px;font-size:11.04px;color:#111;transform:translateX(-100%) rotate(-45deg) scaleX(0.937);transform-origin:100% 50%;">RC099-12</span>
<span class="t" style="left:1529.58px;top:568.48px;font-size:11.04px;color:#111;transform:translateX(-100%) rotate(-45deg) scaleX(0.937);transform-origin:100% 50%;">RC099-13</span>
<span class="t" style="left:1551.52px;top:568.48px;font-size:11.04px;color:#111;transform:translateX(-100%) rotate(-45deg) scaleX(0.947);transform-origin:100% 50%;">RC01313-14</span>
<span class="t" style="left:1573.46px;top:568.48px;font-size:11.04px;color:#111;transform:translateX(-100%) rotate(-45deg) scaleX(0.947);transform-origin:100% 50%;">RC01313-15</span>
<span class="t" style="left:1595.40px;top:568.48px;font-size:11.04px;color:#111;transform:translateX(-100%) rotate(-45deg) scaleX(0.947);transform-origin:100% 50%;">RC01313-16</span>
<span class="t" style="left:1617.34px;top:568.48px;font-size:11.04px;color:#111;transform:translateX(-100%) rotate(-45deg) scaleX(0.947);transform-origin:100% 50%;">RC04141-17</span>
<span class="t" style="left:1639.28px;top:568.48px;font-size:11.04px;color:#111;transform:translateX(-100%) rotate(-45deg) scaleX(0.947);transform-origin:100% 50%;">RC04848-18</span>
<span class="t" style="left:1661.22px;top:568.48px;font-size:11.04px;color:#111;transform:translateX(-100%) rotate(-45deg) scaleX(0.947);transform-origin:100% 50%;">RC05353-19</span>
<span class="t" style="left:1683.16px;top:568.48px;font-size:11.04px;color:#111;transform:translateX(-100%) rotate(-45deg) scaleX(0.960);transform-origin:100% 50%;">RC08282-110</span>
<span class="t" style="left:1705.10px;top:568.48px;font-size:11.04px;color:#111;transform:translateX(-100%) rotate(-45deg) scaleX(0.972);transform-origin:100% 50%;">RC0109109-111</span>
<span class="t" style="left:1727.04px;top:568.48px;font-size:11.04px;color:#111;transform:translateX(-100%) rotate(-45deg) scaleX(0.980);transform-origin:100% 50%;">RC0110110-112</span>
<span class="t" style="left:1748.98px;top:568.48px;font-size:11.04px;color:#111;transform:translateX(-100%) rotate(-45deg) scaleX(0.965);transform-origin:100% 50%;">RC0157157-113</span>
<span class="t" style="left:1770.92px;top:568.48px;font-size:11.04px;color:#111;transform:translateX(-100%) rotate(-45deg) scaleX(0.965);transform-origin:100% 50%;">RC0160160-114</span>
<span class="t" style="left:1792.86px;top:568.48px;font-size:11.04px;color:#111;transform:translateX(-100%) rotate(-45deg) scaleX(0.965);transform-origin:100% 50%;">RC0172172-115</span>
<span class="t" style="left:1814.80px;top:568.48px;font-size:11.04px;color:#111;transform:translateX(-100%) rotate(-45deg) scaleX(0.980);transform-origin:100% 50%;">RC0211211-116</span>
<span class="t" style="left:1836.74px;top:568.48px;font-size:11.04px;color:#111;transform:translateX(-100%) rotate(-45deg) scaleX(0.965);transform-origin:100% 50%;">RC0212212-117</span>
<span class="t" style="left:1858.68px;top:568.48px;font-size:11.04px;color:#111;transform:translateX(-100%) rotate(-45deg) scaleX(0.965);transform-origin:100% 50%;">RC0214214-118</span>
<span class="t" style="left:1880.62px;top:568.48px;font-size:11.04px;color:#111;transform:translateX(-100%) rotate(-45deg) scaleX(0.965);transform-origin:100% 50%;">RC0265265-119</span>
<span class="t" style="left:1902.56px;top:568.48px;font-size:11.04px;color:#111;transform:translateX(-100%) rotate(-45deg) scaleX(0.957);transform-origin:100% 50%;">RC0326326-120</span>
<div style="left:1437px;top:645px;width:500px;height:100px;background:#fff;box-sizing:border-box;border:2px solid #000;"></div>
<span class="t" style="left:1498.10px;top:656.69px;font-size:13.6px;color:#000;transform:scaleX(1.089);transform-origin:0 50%;-webkit-text-stroke:0.35px #000;">Probability of Failure Scores for the Top 20 Onshore</span>
<span class="t" style="left:1525.90px;top:672.99px;font-size:13.6px;color:#000;transform:scaleX(1.066);transform-origin:0 50%;-webkit-text-stroke:0.35px #000;">Segments by Overall Risk Score (ROF) Score</span>
</div></body></html>
